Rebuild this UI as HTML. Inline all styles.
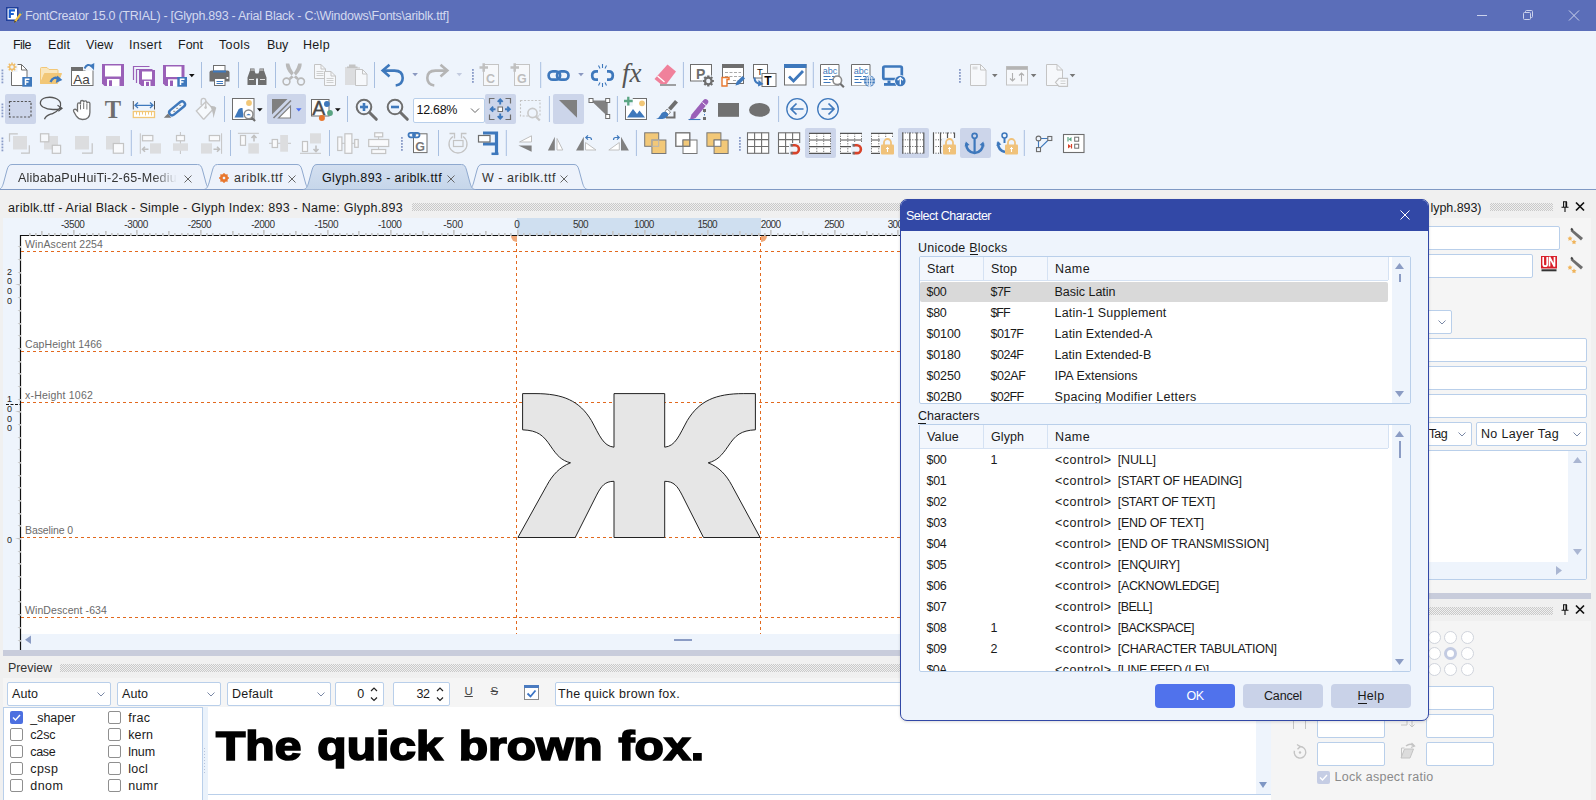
<!DOCTYPE html>
<html><head><meta charset="utf-8"><title>FontCreator</title><style>
html,body{margin:0;padding:0}
body{width:1596px;height:800px;position:relative;overflow:hidden;background:#f0f0f0;font-family:"Liberation Sans",sans-serif;font-size:12px}
body div,body span,body svg{position:absolute;box-sizing:border-box}
span{white-space:pre}
svg{overflow:visible}
</style></head><body>
<div style="left:0px;top:0px;width:1596px;height:31px;background:#5b6eb9;"></div>
<span style="left:25px;top:9.75px;font-size:12.5px;line-height:12.5px;color:#d3d9ef;letter-spacing:-0.268px;">FontCreator 15.0 (TRIAL) - [Glyph.893 - Arial Black - C:\Windows\Fonts\ariblk.ttf]</span>
<svg style="left:6px;top:7px;" width="17" height="16" viewBox="0 0 17 16"><rect x="0.75" y="0.75" width="11" height="12.500" fill="#fff" stroke="#1f3f9a" stroke-width="1.500"/><path d="M3.800 11V3.300h5.200M3.800 7h4" stroke="#1a5fd0" stroke-width="2.200" fill="none"/><path d="M8.500 13.500l6.500-9 1.800 1.300-6.500 9-2.500 1z" fill="#f0c040"/><path d="M13.800 6l1.800 1.300 1.200-1.700-1.800-1.300z" fill="#3b74c4"/><path d="M8 15.800l.5-2.300 1.800 1.300z" fill="#333"/></svg>
<svg style="left:1470px;top:0px;" width="126" height="31" viewBox="0 0 126 31"><path d="M7 15.5h10" stroke="#cbd2ec" stroke-width="1" fill="none"/><rect x="53.5" y="12.5" width="7" height="7" rx="1" stroke="#cbd2ec" stroke-width="1" fill="none"/><path d="M55.5 12.5v-1q0-1 1-1h5q1 0 1 1v5q0 1-1 1h-1" stroke="#cbd2ec" stroke-width="1" fill="none"/><path d="M99 10.5l10 10M109 10.5l-10 10" stroke="#cbd2ec" stroke-width="1" fill="none"/></svg>
<div style="left:0px;top:31px;width:1596px;height:159px;background:#eef4fc;"></div>
<span style="left:13px;top:38.75px;font-size:12.5px;line-height:12.5px;color:#1a1a1a;letter-spacing:-0.539px;">File</span>
<span style="left:48px;top:38.75px;font-size:12.5px;line-height:12.5px;color:#1a1a1a;letter-spacing:0.113px;">Edit</span>
<span style="left:86px;top:38.75px;font-size:12.5px;line-height:12.5px;color:#1a1a1a;letter-spacing:0.031px;">View</span>
<span style="left:129px;top:38.75px;font-size:12.5px;line-height:12.5px;color:#1a1a1a;letter-spacing:0.289px;">Insert</span>
<span style="left:178px;top:38.75px;font-size:12.5px;line-height:12.5px;color:#1a1a1a;letter-spacing:-0.004px;">Font</span>
<span style="left:219px;top:38.75px;font-size:12.5px;line-height:12.5px;color:#1a1a1a;letter-spacing:0.362px;">Tools</span>
<span style="left:267px;top:38.75px;font-size:12.5px;line-height:12.5px;color:#1a1a1a;letter-spacing:-0.182px;">Buy</span>
<span style="left:303px;top:38.75px;font-size:12.5px;line-height:12.5px;color:#1a1a1a;letter-spacing:0.320px;">Help</span>
<div style="left:413px;top:98px;width:72px;height:25px;background:#fff;border:1px solid #b9cfea;border-radius:2px;"></div>
<span style="left:416.6px;top:103.75px;font-size:12.5px;line-height:12.5px;color:#111;letter-spacing:-0.318px;">12.68%</span>
<svg style="left:0px;top:0px;" width="1100" height="160" viewBox="0 0 1100 160"><rect x="1.5" y="69.5" width="1.8" height="1.8" fill="#8a9cc8" /><rect x="1.5" y="72.5" width="1.8" height="1.8" fill="#8a9cc8" /><rect x="1.5" y="75.5" width="1.8" height="1.8" fill="#8a9cc8" /><rect x="1.5" y="78.5" width="1.8" height="1.8" fill="#8a9cc8" /><rect x="1.5" y="81.5" width="1.8" height="1.8" fill="#8a9cc8" /><path d="M11.5 64.5h10l5.5 5.5v15.5h-15.5z" fill="#fff" stroke="#6e6e6e" stroke-width="1" /><path d="M21.5 64.5v5.5h5.5" fill="none" stroke="#6e6e6e" stroke-width="1" /><rect x="7" y="62" width="10.5" height="10" fill="#eef4fc" /><path d="M12 62.5v9M7.5 67h9M8.8 63.8l6.4 6.4M15.2 63.8l-6.4 6.4" fill="none" stroke="#f0bd68" stroke-width="1.5" /><circle cx="12" cy="67" r="2.4" fill="#eef4fc" stroke="#f0bd68" stroke-width="1.4"/><rect x="22.3" y="77" width="9.7" height="9.7" fill="#3e78bc" /><path d="M25.5 85V79.2h4M25.5 82h3" fill="none" stroke="#fff" stroke-width="1.5" /><path d="M40.5 83.5V68.5q0-1 1-1h5.5l2 2h8q1 0 1 1v3.500h-13l-4.500 9.500z" fill="#f9e6bd" stroke="#f2c777" stroke-width="1" /><path d="M40.5 83.5l4-10h17l-4 10z" fill="#f2c777" stroke="#f2c777" stroke-width="1" /><path d="M50.5 82q3-6.500 8.500-3" fill="none" stroke="#3e78bc" stroke-width="2.3" /><path d="M57.300 75.500l5 4.500-6.500 3z" fill="#3e78bc" /><rect x="71.5" y="67.5" width="21.5" height="18" fill="#fff" stroke="#6e6e6e" stroke-width="1" /><rect x="71.5" y="67.5" width="14" height="3.5" fill="#6e6e6e" /><text x="73.3" y="84" font-size="13.5" fill="#444" font-weight="normal" font-style="normal" font-family="'Liberation Sans',sans-serif" >Aa</text><rect x="83" y="62" width="12" height="8.5" fill="#eef4fc" /><path d="M84.5 68.5q3-6 7.5-2" fill="none" stroke="#3e78bc" stroke-width="2" /><path d="M89.5 65.5l4.800-2.500-.3 7.300z" fill="#3e78bc" /><path d="M102 64h22v22h-19.5l-2.5-2.5z" fill="#9a60b8" /><rect x="105" y="65.5" width="16" height="11.0" fill="#fff" /><rect x="107" y="78.96000000000001" width="12.5" height="7.04" fill="#fff" /><rect x="109" y="80.28" width="3" height="5.720000000000001" fill="#9a60b8" /><path d="M133.5 80V66.5h16" fill="none" stroke="#9a60b8" stroke-width="1.2" /><path d="M136.5 83V69.5h16" fill="none" stroke="#9a60b8" stroke-width="1.2" /><path d="M139 70h16v16h-13.5l-2.5-2.5z" fill="#9a60b8" /><rect x="142" y="71.5" width="10" height="8.0" fill="#fff" /><rect x="144" y="80.88" width="6.5" height="5.12" fill="#fff" /><rect x="146" y="81.84" width="3" height="4.16" fill="#9a60b8" /><path d="M163 65h21.5v21h-19.0l-2.5-2.5z" fill="#9a60b8" /><rect x="166" y="66.5" width="15.5" height="10.5" fill="#fff" /><rect x="168" y="79.28" width="12.0" height="6.72" fill="#fff" /><rect x="170" y="80.53999999999999" width="3" height="5.46" fill="#9a60b8" /><rect x="177.3" y="77" width="9.7" height="9.7" fill="#3e78bc" /><path d="M180.5 85V79.2h4M180.5 82h3" fill="none" stroke="#fff" stroke-width="1.5" /><path d="M189 74h5.6l-2.8 3.2z" fill="#111" /><path d="M201.5 62V88" fill="none" stroke="#a8bfe0" stroke-width="1" /><rect x="213.5" y="65.5" width="11.5" height="7" fill="#fff" stroke="#6e6e6e" stroke-width="1" /><path d="M209.5 81.5v-9q0-2 2-2h16q2 0 2 2v9z" fill="#6e6e6e" /><rect x="213" y="70.5" width="13" height="2" fill="#3e78bc" /><rect x="214.5" y="78.5" width="10.5" height="7" fill="#fff" stroke="#6e6e6e" stroke-width="1" /><path d="M216.5 81.5h6.5M216.5 83.5h6.5" fill="none" stroke="#3e78bc" stroke-width="1" /><rect x="226.5" y="77" width="1.8" height="1.8" fill="#fff" /><path d="M238.5 62V88" fill="none" stroke="#a8bfe0" stroke-width="1" /><path d="M247.5 85v-7.5l2.5-7v-2h4.5v2l1.5 4.5v10z" fill="#6e6e6e" /><path d="M266.5 85v-7.5l-2.5-7v-2h-4.5v2l-1.5 4.5v10z" fill="#6e6e6e" /><rect x="255" y="73.5" width="4" height="5" fill="#6e6e6e" /><path d="M249 79.5h5M260 79.5h5" fill="none" stroke="#fff" stroke-width="0.8" /><path d="M250.5 70h3.5M260 70h3.5" fill="none" stroke="#fff" stroke-width="0.8" /><path d="M275.5 62V88" fill="none" stroke="#a8bfe0" stroke-width="1" /><circle cx="286.5" cy="81.5" r="3.4" fill="none" stroke="#b9b9b9" stroke-width="1.6"/><circle cx="301" cy="81.5" r="3.4" fill="none" stroke="#b9b9b9" stroke-width="1.6"/><path d="M285.800 63.500q-.3 6 5.500 11.800l5.800 4.700 1.600-2q-7-5.500-9.500-14.500zM301.700 63.500q.3 6-5.500 11.800l-5.800 4.700-1.600-2q7-5.500 9.500-14.500z" fill="#b9b9b9" /><path d="M314.5 64.5h6.5l4.5 4.5v9.5h-11z" fill="#f6f8fb" stroke="#c4c4c4" stroke-width="1" /><path d="M321.0 64.5v4.5h4.5" fill="none" stroke="#c4c4c4" stroke-width="1" /><path d="M316.5 71.5h7M316.5 73.5h7M316.5 75.5h7" fill="none" stroke="#c4c4c4" stroke-width="0.8" /><path d="M324.5 71.5h6.5l4.5 4.5v9.5h-11z" fill="#f6f8fb" stroke="#c4c4c4" stroke-width="1" /><path d="M331.0 71.5v4.5h4.5" fill="none" stroke="#c4c4c4" stroke-width="1" /><path d="M326.5 78.5h7M326.5 80.5h7M326.5 82.5h7" fill="none" stroke="#c4c4c4" stroke-width="0.8" /><rect x="345" y="67" width="15" height="18" fill="#dcdddf" /><rect x="349" y="64.5" width="6.5" height="3.5" fill="#c4c4c4" /><rect x="347" y="66.5" width="10.5" height="1.6" fill="#c4c4c4" /><path d="M355.5 69.5h7.0l4.5 4.5v11.5h-11.5z" fill="#f6f8fb" stroke="#c4c4c4" stroke-width="1" /><path d="M362.5 69.5v4.5h4.5" fill="none" stroke="#c4c4c4" stroke-width="1" /><path d="M374.5 62V88" fill="none" stroke="#a8bfe0" stroke-width="1" /><path d="M389.5 64.8l-6.8 5.8 6.8 5.8" fill="none" stroke="#3e78bc" stroke-width="2.6" /><path d="M383.5 70.6h11q8.2 0 8.2 7.5 0 6.5-7 7.4" fill="none" stroke="#3e78bc" stroke-width="2.6" /><path d="M412.3 73h5.6l-2.8 3.2z" fill="#8a98c0" /><path d="M440.5 64.8l6.8 5.8-6.8 5.8" fill="none" stroke="#b5b5b5" stroke-width="2.6" /><path d="M446.5 70.6h-11q-8.2 0-8.2 7.5 0 6.5 7 7.4" fill="none" stroke="#b5b5b5" stroke-width="2.6" /><path d="M456.5 73h5.6l-2.8 3.2z" fill="#c3cbdf" /><rect x="472" y="69" width="1.8" height="1.8" fill="#8a9cc8" /><rect x="472" y="72" width="1.8" height="1.8" fill="#8a9cc8" /><rect x="472" y="75" width="1.8" height="1.8" fill="#8a9cc8" /><rect x="472" y="78" width="1.8" height="1.8" fill="#8a9cc8" /><rect x="472" y="81" width="1.8" height="1.8" fill="#8a9cc8" /><rect x="483.5" y="64.5" width="15" height="21" fill="#f6f8fb" stroke="#c4c4c4" stroke-width="1" /><path d="M479.5 67.5h8.5M483.7 63.3v8.5" fill="none" stroke="#c0c0c0" stroke-width="2.5" /><text x="486.1" y="82.8" font-size="12.5" fill="#bdbdbd" font-weight="bold" font-style="normal" font-family="'Liberation Sans',sans-serif" >C</text><rect x="514.5" y="64.5" width="15" height="21" fill="#f6f8fb" stroke="#c4c4c4" stroke-width="1" /><path d="M510.5 67.5h8.5M514.7 63.3v8.5" fill="none" stroke="#c0c0c0" stroke-width="2.5" /><text x="517.1" y="82.8" font-size="12.5" fill="#bdbdbd" font-weight="bold" font-style="normal" font-family="'Liberation Sans',sans-serif" >G</text><path d="M540.7 62V88" fill="none" stroke="#a8bfe0" stroke-width="1" /><rect x="548.6" y="71.3" width="11.5" height="8.4" fill="none" stroke="#3e78bc" stroke-width="2.7" rx="4.2" /><rect x="557" y="71.3" width="11.5" height="8.4" fill="none" stroke="#3e78bc" stroke-width="2.7" rx="4.2" /><path d="M578.2 73h5.6l-2.8 3.2z" fill="#8a98c0" /><path d="M598 71.3h-1.8q-4 0-4 4.2t4 4.2h1.8M607 71.3h1.8q4 0 4 4.2t-4 4.2h-1.8" fill="none" stroke="#3e78bc" stroke-width="2.7" /><path d="M602.5 64v4M602.5 83v4M598.5 65.5l1.5 3M606.5 65.5l-1.5 3M598.5 85.5l1.5-3M606.5 85.5l-1.5-3" fill="none" stroke="#3e78bc" stroke-width="1.1" /><text x="622" y="81.5" font-size="27" fill="#555" font-weight="normal" font-style="italic" font-family="'Liberation Serif',serif" >fx</text><path d="M654.5 79l13-14.5 8.5 7-9.5 12.5h-6z" fill="#f0819b" /><path d="M657.5 76l7 6" fill="none" stroke="#fff" stroke-width="1.3" /><path d="M660 85h16" fill="none" stroke="#8a8a8a" stroke-width="1.6" /><path d="M683.4 62V88" fill="none" stroke="#a8bfe0" stroke-width="1" /><rect x="690.5" y="64.5" width="21" height="16.5" fill="#fff" stroke="#6e6e6e" stroke-width="1" /><text x="696" y="78.5" font-size="14" fill="#6e6e6e" font-weight="bold" font-style="normal" font-family="'Liberation Sans',sans-serif" >P</text><circle cx="708.3" cy="81" r="6.4" fill="#eef4fc"/><circle cx="708.3" cy="81" r="3.286" fill="none" stroke="#6e6e6e" stroke-width="2.226"/><path d="M712.01 81.00L713.87 81.00M710.92 83.62L712.24 84.94M708.30 84.71L708.30 86.56M705.68 83.62L704.36 84.94M704.59 81.00L702.73 81.00M705.68 78.38L704.36 77.06M708.30 77.29L708.30 75.44M710.92 78.38L712.24 77.06" fill="none" stroke="#6e6e6e" stroke-width="2.226" /><rect x="722.5" y="64.5" width="21" height="19" fill="#fff" stroke="#6e6e6e" stroke-width="1" /><rect x="722.5" y="64.5" width="21" height="3.5" fill="#6e6e6e" /><path d="M725 72.5h16M725 76.5h16M733 80.5h8" fill="none" stroke="#a9a9a9" stroke-width="1" stroke-dasharray="3 1.5"/><path d="M722 86v-8.5h7v2h-2v6.5z" fill="#fff" stroke="#e8772e" stroke-width="1.4" /><path d="M735.5 85.5l1-3.5 6-6 2.5 2.5-6 6z" fill="#3e78bc" /><rect x="753.5" y="64.5" width="14" height="13.5" fill="#fff" stroke="#6e6e6e" stroke-width="1" /><text x="757" y="75" font-size="9.5" fill="#111" font-weight="normal" font-style="normal" font-family="'Liberation Sans',sans-serif" >T</text><rect x="762" y="73.5" width="14" height="13" fill="#fff" stroke="#6e6e6e" stroke-width="1" /><text x="764.2" y="85.3" font-size="12" fill="#000" font-weight="bold" font-style="normal" font-family="'Liberation Sans',sans-serif" >T</text><path d="M754.5 77.5q0 6 6.5 6.5" fill="none" stroke="#3e78bc" stroke-width="2" /><path d="M758.5 80l5 4-5.5 2.5z" fill="#3e78bc" /><rect x="784.5" y="64.5" width="21.5" height="20.5" fill="#fff" stroke="#6e6e6e" stroke-width="1" /><rect x="784" y="64" width="22.5" height="4" fill="#3e78bc" /><path d="M789 76.5l4.5 4.5 9.5-10" fill="none" stroke="#3e78bc" stroke-width="2.8" /><path d="M813.3 62V88" fill="none" stroke="#a8bfe0" stroke-width="1" /><path d="M820.5 85.5v-21h18.5v21" fill="#fff" stroke="#6e6e6e" stroke-width="1" /><path d="M820.5 85.5h18.5" fill="none" stroke="#6e6e6e" stroke-width="1" stroke-dasharray="1 1"/><text x="822.8" y="73.5" font-size="9" fill="#3e78bc" font-weight="normal" font-style="normal" font-family="'Liberation Sans',sans-serif" >abc</text><path d="M823.5 76.5h7M832.0 76.5h3M823.5 79.5h4M829.0 79.5h6M823.5 82.5h7" fill="none" stroke="#3e78bc" stroke-width="1" /><path d="M851.5 85.5v-21h18.5v21" fill="#fff" stroke="#6e6e6e" stroke-width="1" /><path d="M851.5 85.5h18.5" fill="none" stroke="#6e6e6e" stroke-width="1" stroke-dasharray="1 1"/><text x="853.8" y="73.5" font-size="9" fill="#3e78bc" font-weight="normal" font-style="normal" font-family="'Liberation Sans',sans-serif" >abc</text><path d="M854.5 76.5h7M863.0 76.5h3M854.5 79.5h4M860.0 79.5h6M854.5 82.5h7" fill="none" stroke="#3e78bc" stroke-width="1" /><circle cx="837.3" cy="80.3" r="4.3" fill="#fff" stroke="#8a8a8a" stroke-width="1.6"/><path d="M840.3 83.8l3.6 3.4" fill="none" stroke="#6e6e6e" stroke-width="2.2" /><circle cx="869.5" cy="81" r="5.6" fill="#3e78bc"/><path d="M864 81h11M869.5 75.5v11M865 78h9M865 84h9" fill="none" stroke="#fff" stroke-width="0.8" /><ellipse cx="869.5" cy="81" rx="2.5" ry="5.3" fill="none" stroke="#fff" stroke-width="0.8"/><rect x="883.3" y="66.5" width="18.5" height="12.5" fill="none" stroke="#3e78bc" stroke-width="2.7" rx="1.5" /><path d="M889 80.5v3" fill="none" stroke="#3e78bc" stroke-width="3" /><rect x="884" y="83" width="12" height="2.8" fill="#3e78bc" /><circle cx="900.3" cy="81" r="6" fill="#eef4fc"/><circle cx="900.3" cy="81" r="5.3" fill="#3e78bc"/><path d="M900.3 84.5v-6.5M897.6 80.3l2.7-2.7 2.7 2.7" fill="none" stroke="#fff" stroke-width="1.3" /><rect x="959" y="69" width="1.8" height="1.8" fill="#8a9cc8" /><rect x="959" y="72" width="1.8" height="1.8" fill="#8a9cc8" /><rect x="959" y="75" width="1.8" height="1.8" fill="#8a9cc8" /><rect x="959" y="78" width="1.8" height="1.8" fill="#8a9cc8" /><rect x="959" y="81" width="1.8" height="1.8" fill="#8a9cc8" /><path d="M970.5 64.5h10.0l5.5 5.5v15.5h-15.5z" fill="#f6f8fb" stroke="#c4c4c4" stroke-width="1" /><path d="M980.5 64.5v5.5h5.5" fill="none" stroke="#c4c4c4" stroke-width="1" /><rect x="972.5" y="66.5" width="5" height="3" fill="#dcdddf" /><path d="M992 74h5.6l-2.8 3.2z" fill="#777" /><rect x="1006.5" y="66.5" width="21" height="18.5" fill="#f6f8fb" stroke="#c4c4c4" stroke-width="1" /><rect x="1006.5" y="66.5" width="21" height="3.3" fill="#b4b4b4" /><path d="M1012.5 73v8M1010 78.5l2.5 2.5 2.5-2.5M1021.5 81.5v-8M1019 75.5l2.5-2.5 2.5 2.5" fill="none" stroke="#b0b0b0" stroke-width="1.1" /><path d="M1030.8 74h5.6l-2.8 3.2z" fill="#777" /><path d="M1046.5 64.5h10.5l5.5 5.5v15.5h-16z" fill="#f6f8fb" stroke="#c4c4c4" stroke-width="1" /><path d="M1057.0 64.5v5.5h5.5" fill="none" stroke="#c4c4c4" stroke-width="1" /><path d="M1055.5 82.3l3.5-4h8.5v8h-8.5z" fill="#f6f8fb" stroke="#c4c4c4" stroke-width="1.2" /><path d="M1060.5 81h5M1060.5 83.5h5" fill="none" stroke="#c4c4c4" stroke-width="0.8" /><path d="M1069.7 74h5.6l-2.8 3.2z" fill="#777" /><rect x="1.5" y="103.5" width="1.8" height="1.8" fill="#8a9cc8" /><rect x="1.5" y="106.5" width="1.8" height="1.8" fill="#8a9cc8" /><rect x="1.5" y="109.5" width="1.8" height="1.8" fill="#8a9cc8" /><rect x="1.5" y="112.5" width="1.8" height="1.8" fill="#8a9cc8" /><rect x="1.5" y="115.5" width="1.8" height="1.8" fill="#8a9cc8" /><rect x="5" y="94" width="31" height="30" fill="#ccd5ea" rx="2" /><rect x="9.5" y="101.5" width="21.5" height="15.5" fill="none" stroke="#555" stroke-width="1.2" stroke-dasharray="2.2 1.6"/><path d="M62 108.300C55 110 47 109.500 43 107C38.500 104 40 99 46 97.700C52 96.300 59 98.500 60.500 103C61.500 107 58 111 53 113.300C49 115 46 115 44.500 119.300" fill="none" stroke="#555" stroke-width="1.3" /><path d="M57.500 105.300L62 108.300L58.300 111.300" fill="none" stroke="#555" stroke-width="1.2" /><path d="M77.500 111v-6.500q0-1.600 1.500-1.600t1.500 1.600v-2.400q0-1.600 1.600-1.600t1.600 1.600v.3q0-1.500 1.600-1.500t1.600 1.500v1.200q0-1.400 1.500-1.400t1.500 1.400v8.900q0 7-7.500 7-3.800 0-6-3.300l-2.600-4.600q-.8-1.600.6-2.200t2.600 1.100z" fill="#fff" stroke="#6e6e6e" stroke-width="1.3" /><path d="M80.500 105v4.500M83.700 103v6M86.900 104v5.500" fill="none" stroke="#6e6e6e" stroke-width="1" /><text x="104.7" y="118" font-size="24.5" fill="#6e6e6e" font-weight="bold" font-style="normal" font-family="'Liberation Serif',serif" >T</text><path d="M133.300 101v8.500M154.500 101v8.500" fill="none" stroke="#555" stroke-width="1" /><path d="M135 105.300h18M138 102.500l-3 2.800 3 2.800M150 102.500l3 2.800-3 2.800" fill="none" stroke="#3e78bc" stroke-width="1.3" /><rect x="133.3" y="111.5" width="21.2" height="6" fill="#fff" stroke="#f2c777" stroke-width="1.3" /><path d="M136.500 112v2.500M139.500 112v3.500M142.500 112v2.500M145.500 112v3.500M148.500 112v2.500M151.500 112v3.500" fill="none" stroke="#f2c777" stroke-width="1" /><g transform="rotate(-39 177.1 108.300)"><rect x="167.800" y="105.400" width="18.600" height="5.800" rx="2.900" fill="#f4f8fd" stroke="#3e78bc" stroke-width="2.400"/></g><path d="M179.200 105.300h2M176.200 108.300h2M173.200 111.300h2" fill="none" stroke="#7a7a7a" stroke-width="0.9" /><path d="M163.800 117.800l4.200-4.200 3.300 4.200z" fill="#7a7a7a" /><path d="M196.300 110.900l9.800-9.500 7.200 7.700-9 9.700q-.6.6-1.300 0z" fill="#f6f9fc" stroke="#c6c6c6" stroke-width="1.4" /><path d="M201.200 105v-4.300a2.300 2.300 0 0 1 4.600 0v6.500" fill="none" stroke="#c6c6c6" stroke-width="1.3" /><circle cx="205.6" cy="107.6" r="1.3" fill="#c6c6c6"/><path d="M210.300 106.100q4.800-.600 6 1.700l-2.900 10.400q-.5-5.500-1.300-7.500z" fill="#bdbdbd" /><path d="M224.5 96V122" fill="none" stroke="#a8bfe0" stroke-width="1" /><rect x="232.5" y="98.5" width="21.5" height="21" fill="#fff" stroke="#6e6e6e" stroke-width="1" /><circle cx="249" cy="103" r="2.9" fill="#f2c777"/><path d="M234.500 117.500l4-8q1-1.500 2.500-1.500h1.500l1 9.500z" fill="#3e78bc" /><circle cx="248.6" cy="114.3" r="4.4" fill="#fff" stroke="#8a8a8a" stroke-width="1.5"/><path d="M246.300 115.300q2.300-3 4.600 0z" fill="#3e78bc" /><path d="M251.600 117.800l3.500 3.200" fill="none" stroke="#6e6e6e" stroke-width="2.2" /><path d="M257 108.3h5.6l-2.8 3.2z" fill="#111" /><rect x="267" y="94" width="39" height="30" fill="#ccd5ea" rx="2" /><path d="M272 99v15.500L287.500 99z" fill="#808080" /><path d="M290.500 106v12h-12z" fill="#fff" stroke="#808080" stroke-width="1.1" /><path d="M273.500 118L291 100.500" fill="none" stroke="#808080" stroke-width="1.6" /><path d="M296 108.3h5.6l-2.8 3.2z" fill="#4a6cf0" /><rect x="311.5" y="99.5" width="17.5" height="16.5" fill="#fff" stroke="#6e6e6e" stroke-width="1" /><text x="312.3" y="115.3" font-size="19.5" fill="#4a4a4a" font-weight="normal" font-style="normal" font-family="'Liberation Sans',sans-serif" stroke="#4a4a4a" stroke-width="0.4">A</text><circle cx="326.9" cy="104" r="2.9" fill="#3e78bc"/><circle cx="330" cy="113" r="2.9" fill="#5aa582"/><circle cx="321.9" cy="118" r="3" fill="#e8772e"/><path d="M335 108.3h5.6l-2.8 3.2z" fill="#111" /><path d="M347.5 96V122" fill="none" stroke="#a8bfe0" stroke-width="1" /><circle cx="364" cy="107" r="7.3" fill="none" stroke="#6e6e6e" stroke-width="2"/><path d="M369.5 112.5l6.800 6.800" fill="none" stroke="#6e6e6e" stroke-width="3" stroke-linecap="round"/><path d="M360 107h8" fill="none" stroke="#3e78bc" stroke-width="2.6" /><path d="M364 103v8" fill="none" stroke="#3e78bc" stroke-width="2.6" /><circle cx="395" cy="107" r="7.3" fill="none" stroke="#6e6e6e" stroke-width="2"/><path d="M400.5 112.5l6.800 6.800" fill="none" stroke="#6e6e6e" stroke-width="3" stroke-linecap="round"/><path d="M391 107h8" fill="none" stroke="#3e78bc" stroke-width="2.6" /><path d="M471 108.500l4 4 4-4" fill="none" stroke="#666" stroke-width="1" /><rect x="485" y="94" width="31" height="30" fill="#ccd5ea" rx="2" /><path d="M494.500 98.500h-5v5M505.500 98.500h5v5M494.500 119.500h-5v-5M505.500 119.500h5v-5" fill="none" stroke="#6e6e6e" stroke-width="1.2" /><rect x="498" y="107" width="4.5" height="4.5" fill="#fff" stroke="#6e6e6e" stroke-width="1" /><path d="M500.200 104.500v-5M497.700 101.800l2.500-2.500 2.500 2.500M500.200 113.500v5M497.700 116.200l2.500 2.500 2.500-2.500M495.500 109.200h-5M493.200 106.700l-2.500 2.500 2.500 2.500M505 109.200h5M507.300 106.700l2.500 2.500-2.500 2.500" fill="none" stroke="#3e78bc" stroke-width="1.9" /><rect x="520.5" y="100.5" width="19.5" height="15.5" fill="none" stroke="#c4c4c4" stroke-width="1.1" stroke-dasharray="2 1.600"/><circle cx="532.5" cy="113" r="4.6" fill="#eef4fc" stroke="#c8c8c8" stroke-width="1.6"/><path d="M535.800 116.500l4 4" fill="none" stroke="#c8c8c8" stroke-width="2.2" /><path d="M549.4 96V122" fill="none" stroke="#a8bfe0" stroke-width="1" /><rect x="553" y="94" width="31" height="30" fill="#ccd5ea" rx="2" /><path d="M559 100.100h18v17.600z" fill="#808080" /><path d="M591 100.500h16.700v16z" fill="#808080" /><rect x="589" y="98.5" width="4" height="4" fill="#fff" stroke="#6e6e6e" stroke-width="1" /><rect x="605.7" y="98.5" width="4" height="4" fill="#fff" stroke="#6e6e6e" stroke-width="1" /><rect x="605.7" y="114.5" width="4" height="4" fill="#fff" stroke="#6e6e6e" stroke-width="1" /><path d="M617.4 96V122" fill="none" stroke="#a8bfe0" stroke-width="1" /><rect x="625.5" y="98.5" width="21" height="21" fill="#fff" stroke="#6e6e6e" stroke-width="1" /><circle cx="642" cy="103.3" r="2.9" fill="#f2c777"/><path d="M627 117.500l6-8.500 4 5 2.500-3.500 5.500 7z" fill="#3e78bc" /><rect x="623.3" y="96.3" width="9.5" height="9.5" fill="#eef4fc" /><path d="M624 101h8.700M628.300 96.700v8.700" fill="none" stroke="#5aa582" stroke-width="2.3" /><path d="M668 108l7-8 3 2.500-7 8z" fill="#6e6e6e" /><path d="M667 109l3.500 3-2 2.500-3.500-3z" fill="#fff" stroke="#6e6e6e" stroke-width="0.8" /><path d="M656 119q3-1 4.500-4 1.500-3.500 5-3.300 3 1 2.500 4-1.500 4-12 3.300z" fill="#3e78bc" /><path d="M666 117.500h8.500v-6" fill="none" stroke="#6e6e6e" stroke-width="2" /><path d="M691.500 114.500l12-14.500q1.800-1.800 3.800-.2t.4 3.800l-12 14.500-6 2.200z" fill="#9a60b8" /><path d="M702.500 102.500l3.500 3" fill="none" stroke="#fff" stroke-width="1" /><path d="M688.500 119.500h12" fill="none" stroke="#3e78bc" stroke-width="1.1" /><path d="M704.500 111v7" fill="none" stroke="#3e78bc" stroke-width="1" stroke-dasharray="1.500 1.500"/><rect x="703" y="109" width="3" height="3" fill="#6e6e6e" /><rect x="703" y="117" width="3" height="3" fill="#6e6e6e" /><rect x="718" y="103" width="21" height="13.8" fill="#717171" /><ellipse cx="759.5" cy="109.9" rx="10.5" ry="6.9" fill="#717171"/><path d="M778.6 96V122" fill="none" stroke="#a8bfe0" stroke-width="1" /><circle cx="797.1" cy="109" r="10.3" fill="none" stroke="#3e78bc" stroke-width="1.3"/><path d="M803.500 109h-12M796.500 103.500l-5.500 5.500 5.500 5.500" fill="none" stroke="#3e78bc" stroke-width="1.7" /><circle cx="828" cy="109" r="10.3" fill="none" stroke="#3e78bc" stroke-width="1.3"/><path d="M821.500 109h12M828.500 103.500l5.500 5.500-5.500 5.500" fill="none" stroke="#3e78bc" stroke-width="1.7" /><rect x="1.5" y="137.5" width="1.8" height="1.8" fill="#8a9cc8" /><rect x="1.5" y="140.5" width="1.8" height="1.8" fill="#8a9cc8" /><rect x="1.5" y="143.5" width="1.8" height="1.8" fill="#8a9cc8" /><rect x="1.5" y="146.5" width="1.8" height="1.8" fill="#8a9cc8" /><rect x="1.5" y="149.5" width="1.8" height="1.8" fill="#8a9cc8" /><rect x="13" y="136" width="14" height="13.5" fill="#dcdddf" /><path d="M17.800 133.800h-8.300v8M21 153.200h8.300v-8" fill="none" stroke="#c4c4c4" stroke-width="1.2" /><rect x="44" y="136" width="14" height="13.5" fill="#dcdddf" /><rect x="40.5" y="133.8" width="8.3" height="8" fill="#f6f8fb" stroke="#c4c4c4" stroke-width="1.2" /><rect x="52.3" y="145.3" width="8.3" height="8" fill="#f6f8fb" stroke="#c4c4c4" stroke-width="1.2" /><rect x="75" y="136" width="14" height="13.5" fill="#dcdddf" /><path d="M82 153.200h10.200v-10" fill="none" stroke="#c4c4c4" stroke-width="1.2" /><rect x="106" y="136" width="14" height="13.5" fill="#dcdddf" /><rect x="113.3" y="143.5" width="10.2" height="9.7" fill="#f9fafc" stroke="#c4c4c4" stroke-width="1.2" /><path d="M131.3 130V156" fill="none" stroke="#a8bfe0" stroke-width="1" /><path d="M140.300 133.300v20.500" fill="none" stroke="#c4c4c4" stroke-width="1" /><rect x="142.5" y="135.5" width="10.3" height="5.3" fill="#f9fafc" stroke="#c4c4c4" stroke-width="1.2" /><rect x="150" y="143.3" width="11" height="10.3" fill="#dcdddf" /><path d="M148.5 149.2h-5.5M145.0 146.7l-2.5 2.500 2.5 2.500" fill="none" stroke="#c0c0c0" stroke-width="1.6" /><path d="M180.400 132v22" fill="none" stroke="#c4c4c4" stroke-width="1" /><rect x="176.5" y="135.5" width="8" height="5.3" fill="#f9fafc" stroke="#c4c4c4" stroke-width="1.2" /><rect x="173" y="143.3" width="15" height="7.5" fill="#dcdddf" /><path d="M221.600 133.300v20.500" fill="none" stroke="#c4c4c4" stroke-width="1" /><rect x="209.3" y="135.5" width="10.3" height="5.3" fill="#f9fafc" stroke="#c4c4c4" stroke-width="1.2" /><rect x="201" y="143.3" width="11" height="10.3" fill="#dcdddf" /><path d="M213.5 149.2h5.5M217.0 146.7l2.5 2.500 -2.5 2.500" fill="none" stroke="#c0c0c0" stroke-width="1.6" /><path d="M230.5 130V156" fill="none" stroke="#a8bfe0" stroke-width="1" /><path d="M237.900 133.300h21" fill="none" stroke="#c4c4c4" stroke-width="1" /><rect x="240.5" y="135.5" width="5" height="9.8" fill="#f9fafc" stroke="#c4c4c4" stroke-width="1.2" /><rect x="248.3" y="143.3" width="10.6" height="10.3" fill="#dcdddf" /><path d="M254 141.5v-5.5M251.5 138.0l2.500 -2.5 2.500 2.5" fill="none" stroke="#c0c0c0" stroke-width="1.6" /><path d="M269 143.300h22" fill="none" stroke="#c4c4c4" stroke-width="1" /><rect x="272.2" y="139.5" width="5.3" height="8" fill="#f9fafc" stroke="#c4c4c4" stroke-width="1.2" /><rect x="280.2" y="135" width="7.8" height="16.7" fill="#dcdddf" /><path d="M300 153.300h21" fill="none" stroke="#c4c4c4" stroke-width="1" /><rect x="302.5" y="141.5" width="5" height="10" fill="#f9fafc" stroke="#c4c4c4" stroke-width="1.2" /><rect x="310" y="133.3" width="11" height="10.2" fill="#dcdddf" /><path d="M316 145.5v5.5M313.5 149.0l2.500 2.5 2.500 -2.5" fill="none" stroke="#c0c0c0" stroke-width="1.6" /><path d="M329.5 130V156" fill="none" stroke="#a8bfe0" stroke-width="1" /><path d="M341 143.300h16" fill="none" stroke="#c4c4c4" stroke-width="1" /><rect x="337.7" y="137" width="4.2" height="13.5" fill="#f9fafc" stroke="#c4c4c4" stroke-width="1.2" /><rect x="344.9" y="133.8" width="7" height="19.5" fill="#f9fafc" stroke="#c4c4c4" stroke-width="1.2" /><rect x="354.7" y="139.5" width="3.5" height="7.8" fill="#f9fafc" stroke="#c4c4c4" stroke-width="1.2" /><path d="M378.600 136v14" fill="none" stroke="#c4c4c4" stroke-width="1" /><rect x="374.7" y="132.8" width="8" height="4" fill="#f9fafc" stroke="#c4c4c4" stroke-width="1.2" /><rect x="368.7" y="139.5" width="20" height="7" fill="#f9fafc" stroke="#c4c4c4" stroke-width="1.2" /><rect x="371.7" y="149.5" width="14" height="4" fill="#f9fafc" stroke="#c4c4c4" stroke-width="1.2" /><rect x="401" y="137" width="1.8" height="1.8" fill="#8a9cc8" /><rect x="401" y="140" width="1.8" height="1.8" fill="#8a9cc8" /><rect x="401" y="143" width="1.8" height="1.8" fill="#8a9cc8" /><rect x="401" y="146" width="1.8" height="1.8" fill="#8a9cc8" /><rect x="401" y="149" width="1.8" height="1.8" fill="#8a9cc8" /><rect x="413.5" y="133.8" width="13.5" height="18.8" fill="#fff" stroke="#6e6e6e" stroke-width="1" /><text x="415.3" y="150.5" font-size="12.5" fill="#777" font-weight="bold" font-style="normal" font-family="'Liberation Sans',sans-serif" >G</text><rect x="408.5" y="132.8" width="6.5" height="4.5" fill="none" stroke="#3e78bc" stroke-width="1.8" rx="2.2" /><rect x="413" y="132.8" width="6.5" height="4.5" fill="none" stroke="#3e78bc" stroke-width="1.8" rx="2.2" /><path d="M438.5 130V156" fill="none" stroke="#a8bfe0" stroke-width="1" /><path d="M453 136.500a9 9 0 1 0 10 0" fill="none" stroke="#c4c4c4" stroke-width="1.3" /><path d="M449.500 133.500h5v5M466.500 133.500h-5v5" fill="none" stroke="#c4c4c4" stroke-width="1.3" /><rect x="453.5" y="140.5" width="9.5" height="6" fill="none" stroke="#c4c4c4" stroke-width="1.2" /><path d="M483 133h13.500v20.500M483 144h13.500" fill="none" stroke="#3e78bc" stroke-width="3.2" /><path d="M491.500 153.800h7" fill="none" stroke="#3e78bc" stroke-width="2.5" /><rect x="478.5" y="135.5" width="11.5" height="6.5" fill="#fff" stroke="#6e6e6e" stroke-width="1.2" /><path d="M506.3 130V156" fill="none" stroke="#a8bfe0" stroke-width="1" /><path d="M519.500 142l12-6.200v6.200z" fill="#fff" stroke="#c0c0c0" stroke-width="1" /><path d="M518.400 145.400h13.200v6.300z" fill="#808080" /><path d="M547.900 150.400l6.900-13.700v13.700z" fill="#808080" /><path d="M557 138.500v11.500h5.800z" fill="#fff" stroke="#c0c0c0" stroke-width="1" /><path d="M576 150.400l7.800-13.700v13.700z" fill="#808080" /><path d="M585.500 142.500v7.500h10.500z" fill="#fff" stroke="#c0c0c0" stroke-width="1" /><path d="M586 137.500h3.500q2 0 2 2.500M588 135.300l-2.200 2.200 2.200 2.200" fill="none" stroke="#3e78bc" stroke-width="1.2" /><path d="M628.900 150.400l-7.900-13.700v13.700z" fill="#808080" /><path d="M619.300 142.500v7.500h-10.500z" fill="#fff" stroke="#c0c0c0" stroke-width="1" /><path d="M619 137.500h-3.500q-2 0-2 2.500M617 135.300l2.200 2.200-2.200 2.200" fill="none" stroke="#3e78bc" stroke-width="1.2" /><path d="M636.4 130V156" fill="none" stroke="#a8bfe0" stroke-width="1" /><rect x="644.7" y="132.8" width="14" height="13.5" fill="#f2c878" stroke="#777" stroke-width="1" /><rect x="651.9" y="140" width="14" height="13.5" fill="#f2c878" stroke="#777" stroke-width="1" /><rect x="651.9" y="140" width="6.8" height="6.3" fill="none" stroke="#b5b5b5" stroke-width="1" /><rect x="675.8" y="132.8" width="14" height="13.5" fill="#fff" stroke="#777" stroke-width="1" /><rect x="683" y="140" width="14" height="13.5" fill="#fff" stroke="#777" stroke-width="1" /><rect x="683" y="140" width="6.8" height="6.3" fill="#f2c878" stroke="#777" stroke-width="1" /><rect x="675.8" y="132.8" width="14" height="13.5" fill="none" stroke="#777" stroke-width="1" /><rect x="706.9" y="132.8" width="14" height="13.5" fill="#f2c878" stroke="#777" stroke-width="1" /><rect x="714.1" y="140" width="14" height="13.5" fill="#f2c878" stroke="#777" stroke-width="1" /><rect x="714.1" y="140" width="6.8" height="6.3" fill="#fff" stroke="#777" stroke-width="1" /><rect x="739" y="137" width="1.8" height="1.8" fill="#8a9cc8" /><rect x="739" y="140" width="1.8" height="1.8" fill="#8a9cc8" /><rect x="739" y="143" width="1.8" height="1.8" fill="#8a9cc8" /><rect x="739" y="146" width="1.8" height="1.8" fill="#8a9cc8" /><rect x="739" y="149" width="1.8" height="1.8" fill="#8a9cc8" /><rect x="747.5" y="132.8" width="21.2" height="20.5" fill="#fff" stroke="#6e6e6e" stroke-width="1.1" /><path d="M754.6 132.8v20.5M761.6 132.8v20.5M747.5 139.6h21.2M747.5 146.5h21.2" fill="none" stroke="#6e6e6e" stroke-width="1.1" /><rect x="778.5" y="132.8" width="21.2" height="20.5" fill="#fff" stroke="#6e6e6e" stroke-width="1.1" /><path d="M785.6 132.8v20.5M792.6 132.8v20.5M778.5 139.6h21.2M778.5 146.5h21.2" fill="none" stroke="#6e6e6e" stroke-width="1.1" /><rect x="789" y="143" width="12" height="12" fill="#eef4fc" /><path d="M791.5 145.3h3.500a3.900 3.900 0 0 1 0 7.800h-3.500" fill="none" stroke="#d8432a" stroke-width="2.6" /><rect x="790.5" y="144" width="2.2" height="2.6" fill="#6e6e6e" /><rect x="790.5" y="151.8" width="2.2" height="2.6" fill="#6e6e6e" /><rect x="805" y="128" width="31" height="30" fill="#ccd5ea" rx="2" /><rect x="809" y="133.3" width="22" height="20" fill="#fff" /><path d="M809 133.300h22M809 140h22M809 146.700h22M809 153.300h22" fill="none" stroke="#555" stroke-width="1.2" /><path d="M809.5 133.300v20M816.8 133.300v20M823.7 133.300v20M830.5 133.300v20" fill="none" stroke="#555" stroke-width="1" stroke-dasharray="1 1.500"/><rect x="840" y="133.3" width="22" height="20" fill="#fff" /><path d="M840 133.300h22M840 140h22M840 146.700h22M840 153.300h22" fill="none" stroke="#555" stroke-width="1.2" /><path d="M840.5 133.300v20M847.8 133.300v20M854.7 133.300v20M861.5 133.300v20" fill="none" stroke="#555" stroke-width="1" stroke-dasharray="1 1.500"/><rect x="851" y="143" width="12" height="12" fill="#eef4fc" /><path d="M853.5 145.3h3.500a3.900 3.900 0 0 1 0 7.800h-3.500" fill="none" stroke="#d8432a" stroke-width="2.6" /><rect x="852.5" y="144" width="2.2" height="2.6" fill="#6e6e6e" /><rect x="852.5" y="151.8" width="2.2" height="2.6" fill="#6e6e6e" /><rect x="871" y="133.3" width="22" height="20" fill="#fff" /><path d="M871 133.300h22M871 140h22M871 146.700h22M871 153.300h22" fill="none" stroke="#555" stroke-width="1.2" /><path d="M871.5 133.300v20M878.8 133.300v20M885.7 133.300v20M892.5 133.300v20" fill="none" stroke="#555" stroke-width="1" stroke-dasharray="1 1.500"/><rect x="880" y="138" width="15" height="17" fill="#eef4fc" /><path d="M884 145v-2.500a3.500 3.500 0 0 1 7 0v2.500" fill="none" stroke="#f0c27a" stroke-width="1.8" /><rect x="881" y="144.5" width="13" height="10" fill="#f0c27a" rx="1" /><path d="M887.5 147v5M886 148.5h3" fill="none" stroke="#fff" stroke-width="1.1" /><rect x="898" y="128" width="31" height="30" fill="#ccd5ea" rx="2" /><rect x="902.8" y="133" width="21" height="20.2" fill="#fff" /><path d="M902.8 132.500v21M909.8 132.500v21M916.8 132.500v21M923.8 132.500v21" fill="none" stroke="#555" stroke-width="1.2" /><path d="M902.3 133h22M902.3 139.800h22M902.3 146.500h22M902.3 153.200h22" fill="none" stroke="#555" stroke-width="1" stroke-dasharray="1 1.500"/><rect x="933.5" y="133" width="21" height="20.2" fill="#fff" /><path d="M933.5 132.500v21M940.5 132.500v21M947.5 132.500v21M954.5 132.500v21" fill="none" stroke="#555" stroke-width="1.2" /><path d="M933 133h22M933 139.800h22M933 146.500h22M933 153.200h22" fill="none" stroke="#555" stroke-width="1" stroke-dasharray="1 1.500"/><rect x="942" y="138" width="15" height="17" fill="#eef4fc" /><path d="M946 145v-2.500a3.500 3.500 0 0 1 7 0v2.500" fill="none" stroke="#f0c27a" stroke-width="1.8" /><rect x="943" y="144.5" width="13" height="10" fill="#f0c27a" rx="1" /><path d="M949.5 147v5M948 148.5h3" fill="none" stroke="#fff" stroke-width="1.1" /><rect x="960" y="128" width="31" height="30" fill="#ccd5ea" rx="2" /><circle cx="974.6" cy="135.8" r="2.5" fill="none" stroke="#3e78bc" stroke-width="1.7"/><path d="M974.6 138.500v13.500" fill="none" stroke="#3e78bc" stroke-width="2.2" /><path d="M966.1 143.500q.5 9 8.500 9.500 8-.5 8.500-9.500" fill="none" stroke="#3e78bc" stroke-width="2.6" /><path d="M964.6 146.500l1.300-5 3.700 3.500zM984.6 146.500l-1.300-5-3.700 3.500z" fill="#3e78bc" /><circle cx="1004.5" cy="135.5" r="2.5" fill="none" stroke="#3e78bc" stroke-width="1.5"/><path d="M1004.500 138v5" fill="none" stroke="#3e78bc" stroke-width="2" /><path d="M998 142.500q0 8 7 9.500" fill="none" stroke="#3e78bc" stroke-width="2.6" /><path d="M996.300 146l1.500-5 3.500 3.500z" fill="#3e78bc" /><path d="M1008 145v-2.500a3.500 3.500 0 0 1 7 0v2.500" fill="none" stroke="#f0c27a" stroke-width="1.8" /><rect x="1005" y="144.5" width="13" height="10" fill="#f0c27a" rx="1" /><path d="M1011.5 147v5M1010 148.5h3" fill="none" stroke="#fff" stroke-width="1.1" /><path d="M1024.3 130V156" fill="none" stroke="#a8bfe0" stroke-width="1" /><path d="M1038.500 138.500h11.300M1038.500 138.500v11M1038.500 149.600l11.300-11.100" fill="none" stroke="#3e78bc" stroke-width="1.1" /><circle cx="1038.5" cy="138.5" r="2.4" fill="#eef4fc" stroke="#6e6e6e" stroke-width="1.1"/><rect x="1047.8" y="136.5" width="4" height="4" fill="#eef4fc" stroke="#6e6e6e" stroke-width="1.1" /><rect x="1036.5" y="147.6" width="4" height="4" fill="#eef4fc" stroke="#6e6e6e" stroke-width="1.1" /><rect x="1063.5" y="134.5" width="20.5" height="18" fill="#fff" stroke="#6e6e6e" stroke-width="1.1" /><path d="M1068 137v4.500" fill="none" stroke="#5aa582" stroke-width="1.2" /><path d="M1071.500 137v4.500l-3-2.250z" fill="#5aa582" /><path d="M1071.500 144v4.500" fill="none" stroke="#d8432a" stroke-width="1.2" /><path d="M1068 144v4.500l3-2.250z" fill="#d8432a" /><rect x="1074.7" y="137.2" width="4" height="4" fill="#fff" stroke="#6e6e6e" stroke-width="1" /><rect x="1074.7" y="144.2" width="4" height="4" fill="#fff" stroke="#6e6e6e" stroke-width="1" /></svg>
<svg style="left:0px;top:0px;" width="1596" height="192" viewBox="0 0 1596 192"><defs><linearGradient id="tg" x1="0" y1="0" x2="0" y2="1"><stop offset="0" stop-color="#d3dff0"/><stop offset="1" stop-color="#c6d6ea"/></linearGradient></defs><path d="M-2 189.5 C1.5 189.5 2.5 186 3.5 183 L7 170 C8 166.5 9 164.5 12 164.5 L197.5 164.5 C200.5 164.5 201.5 166.5 202.5 170 L206.0 183 C207.0 186 208.0 189.5 211.5 189.5" fill="#edf2fb" stroke="#8fa9cf" stroke-width="1"/><path d="M203.5 189.5 C207.0 189.5 208.0 186 209.0 183 L212.5 170 C213.5 166.5 214.5 164.5 217.5 164.5 L297 164.5 C300 164.5 301 166.5 302 170 L305.5 183 C306.5 186 307.5 189.5 311 189.5" fill="#edf2fb" stroke="#8fa9cf" stroke-width="1"/><path d="M468 189.5 C471.5 189.5 472.5 186 473.5 183 L477 170 C478 166.5 479 164.5 482 164.5 L574 164.5 C577 164.5 578 166.5 579 170 L582.5 183 C583.5 186 584.5 189.5 588 189.5" fill="#edf2fb" stroke="#8fa9cf" stroke-width="1"/><path d="M0 189.5H1596" stroke="#7f99c4" stroke-width="1"/><path d="M303 189.5 C306.5 189.5 307.5 186 308.5 183 L312 170 C313 166.5 314 164.5 317 164.5 L461.5 164.5 C464.5 164.5 465.5 166.5 466.5 170 L470.0 183 C471.0 186 472.0 189.5 475.5 189.5" fill="url(#tg)" stroke="#8fa9cf" stroke-width="1"/></svg>
<span style="left:18px;top:171.75px;font-size:12.5px;line-height:12.5px;color:#333;letter-spacing:0.236px;-webkit-mask-image:linear-gradient(90deg,#000 85%,transparent);">AlibabaPuHuiTi-2-65-Mediu</span>
<span style="left:234px;top:171.75px;font-size:12.5px;line-height:12.5px;color:#333;letter-spacing:0.523px;">ariblk.ttf</span>
<span style="left:322px;top:171.75px;font-size:12.5px;line-height:12.5px;color:#111;letter-spacing:0.370px;">Glyph.893 - ariblk.ttf</span>
<span style="left:482px;top:171.75px;font-size:12.5px;line-height:12.5px;color:#333;letter-spacing:0.523px;">W - ariblk.ttf</span>
<svg style="left:183.5px;top:174.5px;" width="8" height="8" viewBox="0 0 8 8"><path d="M0.5 0.5l7 7M7.5 0.5l-7 7" stroke="#666" stroke-width="1" fill="none"/></svg>
<svg style="left:287.5px;top:174.5px;" width="8" height="8" viewBox="0 0 8 8"><path d="M0.5 0.5l7 7M7.5 0.5l-7 7" stroke="#666" stroke-width="1" fill="none"/></svg>
<svg style="left:446.5px;top:174.5px;" width="8" height="8" viewBox="0 0 8 8"><path d="M0.5 0.5l7 7M7.5 0.5l-7 7" stroke="#666" stroke-width="1" fill="none"/></svg>
<svg style="left:559.5px;top:174.5px;" width="8" height="8" viewBox="0 0 8 8"><path d="M0.5 0.5l7 7M7.5 0.5l-7 7" stroke="#666" stroke-width="1" fill="none"/></svg>
<svg style="left:219px;top:172.5px;" width="10" height="10" viewBox="0 0 10 10"><circle cx="5" cy="5" r="3" fill="none" stroke="#e8772e" stroke-width="2"/><path d="M5 0v10M0 5h10M1.5 1.5l7 7M8.5 1.5l-7 7" stroke="#e8772e" stroke-width="1.3"/><circle cx="5" cy="5" r="1.3" fill="#edf2fb"/></svg>
<span style="left:8px;top:201.75px;font-size:12.5px;line-height:12.5px;color:#1a1a1a;letter-spacing:0.264px;">ariblk.ttf - Arial Black - Simple - Glyph Index: 893 - Name: Glyph.893</span>
<div style="left:412px;top:203px;width:500px;height:8px;background-image:conic-gradient(#c9c9c9 25%,transparent 0 50%,#c9c9c9 0 75%,transparent 0);background-size:2px 2px;"></div>
<div style="left:3px;top:218px;width:900px;height:19px;background:#eef4fc;"></div>
<div style="left:3px;top:218px;width:18px;height:432px;background:#eef4fc;"></div>
<div style="left:517px;top:218px;width:244px;height:17px;background:#cfdff0;"></div>
<div style="left:21px;top:236px;width:882px;height:398px;background:#fff;"></div>
<div style="left:21px;top:634px;width:882px;height:16px;background:#eef4fc;"></div>
<svg style="left:23px;top:634px;" width="10" height="12" viewBox="0 0 10 12"><path d="M8 1.500v8.500L2 5.750z" fill="#8b9cc4"/></svg>
<div style="left:674px;top:639px;width:18px;height:2px;background:#8b9cc4;"></div>
<div style="left:3px;top:650px;width:1275px;height:6px;background:#c8ccdb;"></div>
<svg style="left:0px;top:0px;" width="904" height="656" viewBox="0 0 904 656"><path d="M20 235.5H903" stroke="#111" stroke-width="1.2"/><path d="M20.5 235V650" stroke="#111" stroke-width="1.2"/><rect x="29" y="233" width="1.7" height="3" fill="#c6c6c6"/><rect x="35" y="233" width="1.7" height="3" fill="#c6c6c6"/><rect x="41" y="231" width="1.7" height="5" fill="#c6c6c6"/><rect x="48" y="233" width="1.7" height="3" fill="#c6c6c6"/><rect x="54" y="233" width="1.7" height="3" fill="#c6c6c6"/><rect x="60" y="233" width="1.7" height="3" fill="#c6c6c6"/><rect x="67" y="233" width="1.7" height="3" fill="#c6c6c6"/><rect x="73" y="230" width="1.7" height="6" fill="#c6c6c6"/><rect x="79" y="233" width="1.7" height="3" fill="#c6c6c6"/><rect x="86" y="233" width="1.7" height="3" fill="#c6c6c6"/><rect x="92" y="233" width="1.7" height="3" fill="#c6c6c6"/><rect x="98" y="233" width="1.7" height="3" fill="#c6c6c6"/><rect x="105" y="231" width="1.7" height="5" fill="#c6c6c6"/><rect x="111" y="233" width="1.7" height="3" fill="#c6c6c6"/><rect x="117" y="233" width="1.7" height="3" fill="#c6c6c6"/><rect x="124" y="233" width="1.7" height="3" fill="#c6c6c6"/><rect x="130" y="233" width="1.7" height="3" fill="#c6c6c6"/><rect x="136" y="230" width="1.7" height="6" fill="#c6c6c6"/><rect x="143" y="233" width="1.7" height="3" fill="#c6c6c6"/><rect x="149" y="233" width="1.7" height="3" fill="#c6c6c6"/><rect x="155" y="233" width="1.7" height="3" fill="#c6c6c6"/><rect x="162" y="233" width="1.7" height="3" fill="#c6c6c6"/><rect x="168" y="231" width="1.7" height="5" fill="#c6c6c6"/><rect x="174" y="233" width="1.7" height="3" fill="#c6c6c6"/><rect x="181" y="233" width="1.7" height="3" fill="#c6c6c6"/><rect x="187" y="233" width="1.7" height="3" fill="#c6c6c6"/><rect x="193" y="233" width="1.7" height="3" fill="#c6c6c6"/><rect x="200" y="230" width="1.7" height="6" fill="#c6c6c6"/><rect x="206" y="233" width="1.7" height="3" fill="#c6c6c6"/><rect x="212" y="233" width="1.7" height="3" fill="#c6c6c6"/><rect x="219" y="233" width="1.7" height="3" fill="#c6c6c6"/><rect x="225" y="233" width="1.7" height="3" fill="#c6c6c6"/><rect x="232" y="231" width="1.7" height="5" fill="#c6c6c6"/><rect x="238" y="233" width="1.7" height="3" fill="#c6c6c6"/><rect x="244" y="233" width="1.7" height="3" fill="#c6c6c6"/><rect x="251" y="233" width="1.7" height="3" fill="#c6c6c6"/><rect x="257" y="233" width="1.7" height="3" fill="#c6c6c6"/><rect x="263" y="230" width="1.7" height="6" fill="#c6c6c6"/><rect x="270" y="233" width="1.7" height="3" fill="#c6c6c6"/><rect x="276" y="233" width="1.7" height="3" fill="#c6c6c6"/><rect x="282" y="233" width="1.7" height="3" fill="#c6c6c6"/><rect x="289" y="233" width="1.7" height="3" fill="#c6c6c6"/><rect x="295" y="231" width="1.7" height="5" fill="#c6c6c6"/><rect x="301" y="233" width="1.7" height="3" fill="#c6c6c6"/><rect x="308" y="233" width="1.7" height="3" fill="#c6c6c6"/><rect x="314" y="233" width="1.7" height="3" fill="#c6c6c6"/><rect x="320" y="233" width="1.7" height="3" fill="#c6c6c6"/><rect x="327" y="230" width="1.7" height="6" fill="#c6c6c6"/><rect x="333" y="233" width="1.7" height="3" fill="#c6c6c6"/><rect x="339" y="233" width="1.7" height="3" fill="#c6c6c6"/><rect x="346" y="233" width="1.7" height="3" fill="#c6c6c6"/><rect x="352" y="233" width="1.7" height="3" fill="#c6c6c6"/><rect x="358" y="231" width="1.7" height="5" fill="#c6c6c6"/><rect x="365" y="233" width="1.7" height="3" fill="#c6c6c6"/><rect x="371" y="233" width="1.7" height="3" fill="#c6c6c6"/><rect x="377" y="233" width="1.7" height="3" fill="#c6c6c6"/><rect x="384" y="233" width="1.7" height="3" fill="#c6c6c6"/><rect x="390" y="230" width="1.7" height="6" fill="#c6c6c6"/><rect x="396" y="233" width="1.7" height="3" fill="#c6c6c6"/><rect x="403" y="233" width="1.7" height="3" fill="#c6c6c6"/><rect x="409" y="233" width="1.7" height="3" fill="#c6c6c6"/><rect x="415" y="233" width="1.7" height="3" fill="#c6c6c6"/><rect x="422" y="231" width="1.7" height="5" fill="#c6c6c6"/><rect x="428" y="233" width="1.7" height="3" fill="#c6c6c6"/><rect x="434" y="233" width="1.7" height="3" fill="#c6c6c6"/><rect x="441" y="233" width="1.7" height="3" fill="#c6c6c6"/><rect x="447" y="233" width="1.7" height="3" fill="#c6c6c6"/><rect x="453" y="230" width="1.7" height="6" fill="#c6c6c6"/><rect x="460" y="233" width="1.7" height="3" fill="#c6c6c6"/><rect x="466" y="233" width="1.7" height="3" fill="#c6c6c6"/><rect x="472" y="233" width="1.7" height="3" fill="#c6c6c6"/><rect x="479" y="233" width="1.7" height="3" fill="#c6c6c6"/><rect x="485" y="231" width="1.7" height="5" fill="#c6c6c6"/><rect x="491" y="233" width="1.7" height="3" fill="#c6c6c6"/><rect x="498" y="233" width="1.7" height="3" fill="#c6c6c6"/><rect x="504" y="233" width="1.7" height="3" fill="#c6c6c6"/><rect x="510" y="233" width="1.7" height="3" fill="#c6c6c6"/><rect x="517" y="230" width="1.7" height="6" fill="#c6c6c6"/><rect x="523" y="233" width="1.7" height="3" fill="#c6c6c6"/><rect x="529" y="233" width="1.7" height="3" fill="#c6c6c6"/><rect x="536" y="233" width="1.7" height="3" fill="#c6c6c6"/><rect x="542" y="233" width="1.7" height="3" fill="#c6c6c6"/><rect x="549" y="231" width="1.7" height="5" fill="#c6c6c6"/><rect x="555" y="233" width="1.7" height="3" fill="#c6c6c6"/><rect x="561" y="233" width="1.7" height="3" fill="#c6c6c6"/><rect x="568" y="233" width="1.7" height="3" fill="#c6c6c6"/><rect x="574" y="233" width="1.7" height="3" fill="#c6c6c6"/><rect x="580" y="230" width="1.7" height="6" fill="#c6c6c6"/><rect x="587" y="233" width="1.7" height="3" fill="#c6c6c6"/><rect x="593" y="233" width="1.7" height="3" fill="#c6c6c6"/><rect x="599" y="233" width="1.7" height="3" fill="#c6c6c6"/><rect x="606" y="233" width="1.7" height="3" fill="#c6c6c6"/><rect x="612" y="231" width="1.7" height="5" fill="#c6c6c6"/><rect x="618" y="233" width="1.7" height="3" fill="#c6c6c6"/><rect x="625" y="233" width="1.7" height="3" fill="#c6c6c6"/><rect x="631" y="233" width="1.7" height="3" fill="#c6c6c6"/><rect x="637" y="233" width="1.7" height="3" fill="#c6c6c6"/><rect x="644" y="230" width="1.7" height="6" fill="#c6c6c6"/><rect x="650" y="233" width="1.7" height="3" fill="#c6c6c6"/><rect x="656" y="233" width="1.7" height="3" fill="#c6c6c6"/><rect x="663" y="233" width="1.7" height="3" fill="#c6c6c6"/><rect x="669" y="233" width="1.7" height="3" fill="#c6c6c6"/><rect x="675" y="231" width="1.7" height="5" fill="#c6c6c6"/><rect x="682" y="233" width="1.7" height="3" fill="#c6c6c6"/><rect x="688" y="233" width="1.7" height="3" fill="#c6c6c6"/><rect x="694" y="233" width="1.7" height="3" fill="#c6c6c6"/><rect x="701" y="233" width="1.7" height="3" fill="#c6c6c6"/><rect x="707" y="230" width="1.7" height="6" fill="#c6c6c6"/><rect x="713" y="233" width="1.7" height="3" fill="#c6c6c6"/><rect x="720" y="233" width="1.7" height="3" fill="#c6c6c6"/><rect x="726" y="233" width="1.7" height="3" fill="#c6c6c6"/><rect x="732" y="233" width="1.7" height="3" fill="#c6c6c6"/><rect x="739" y="231" width="1.7" height="5" fill="#c6c6c6"/><rect x="745" y="233" width="1.7" height="3" fill="#c6c6c6"/><rect x="751" y="233" width="1.7" height="3" fill="#c6c6c6"/><rect x="758" y="233" width="1.7" height="3" fill="#c6c6c6"/><rect x="764" y="233" width="1.7" height="3" fill="#c6c6c6"/><rect x="770" y="230" width="1.7" height="6" fill="#c6c6c6"/><rect x="777" y="233" width="1.7" height="3" fill="#c6c6c6"/><rect x="783" y="233" width="1.7" height="3" fill="#c6c6c6"/><rect x="789" y="233" width="1.7" height="3" fill="#c6c6c6"/><rect x="796" y="233" width="1.7" height="3" fill="#c6c6c6"/><rect x="802" y="231" width="1.7" height="5" fill="#c6c6c6"/><rect x="808" y="233" width="1.7" height="3" fill="#c6c6c6"/><rect x="815" y="233" width="1.7" height="3" fill="#c6c6c6"/><rect x="821" y="233" width="1.7" height="3" fill="#c6c6c6"/><rect x="827" y="233" width="1.7" height="3" fill="#c6c6c6"/><rect x="834" y="230" width="1.7" height="6" fill="#c6c6c6"/><rect x="840" y="233" width="1.7" height="3" fill="#c6c6c6"/><rect x="846" y="233" width="1.7" height="3" fill="#c6c6c6"/><rect x="853" y="233" width="1.7" height="3" fill="#c6c6c6"/><rect x="859" y="233" width="1.7" height="3" fill="#c6c6c6"/><rect x="866" y="231" width="1.7" height="5" fill="#c6c6c6"/><rect x="872" y="233" width="1.7" height="3" fill="#c6c6c6"/><rect x="878" y="233" width="1.7" height="3" fill="#c6c6c6"/><rect x="885" y="233" width="1.7" height="3" fill="#c6c6c6"/><rect x="891" y="233" width="1.7" height="3" fill="#c6c6c6"/><rect x="897" y="230" width="1.7" height="6" fill="#c6c6c6"/><rect x="904" y="233" width="1.7" height="3" fill="#c6c6c6"/><path d="M17.5 640H21V641.7H20z" fill="#c2c2c2"/><path d="M17.5 627H21V628.7H20z" fill="#c2c2c2"/><path d="M17.5 614H21V615.7H20z" fill="#c2c2c2"/><path d="M17.5 601H21V602.7H20z" fill="#c2c2c2"/><path d="M17.5 589H21V590.7H20z" fill="#c2c2c2"/><path d="M17.5 576H21V577.7H20z" fill="#c2c2c2"/><path d="M17.5 563H21V564.7H20z" fill="#c2c2c2"/><path d="M17.5 551H21V552.7H20z" fill="#c2c2c2"/><path d="M15 538H21V539.7H20z" fill="#c2c2c2"/><path d="M17.5 525H21V526.7H20z" fill="#c2c2c2"/><path d="M17.5 513H21V514.7H20z" fill="#c2c2c2"/><path d="M17.5 500H21V501.7H20z" fill="#c2c2c2"/><path d="M17.5 487H21V488.7H20z" fill="#c2c2c2"/><path d="M17.5 475H21V476.7H20z" fill="#c2c2c2"/><path d="M17.5 462H21V463.7H20z" fill="#c2c2c2"/><path d="M17.5 449H21V450.7H20z" fill="#c2c2c2"/><path d="M17.5 437H21V438.7H20z" fill="#c2c2c2"/><path d="M17.5 424H21V425.7H20z" fill="#c2c2c2"/><path d="M15 411H21V412.7H20z" fill="#c2c2c2"/><path d="M17.5 399H21V400.7H20z" fill="#c2c2c2"/><path d="M17.5 386H21V387.7H20z" fill="#c2c2c2"/><path d="M17.5 373H21V374.7H20z" fill="#c2c2c2"/><path d="M17.5 361H21V362.7H20z" fill="#c2c2c2"/><path d="M17.5 348H21V349.7H20z" fill="#c2c2c2"/><path d="M17.5 335H21V336.7H20z" fill="#c2c2c2"/><path d="M17.5 323H21V324.7H20z" fill="#c2c2c2"/><path d="M17.5 310H21V311.7H20z" fill="#c2c2c2"/><path d="M17.5 297H21V298.7H20z" fill="#c2c2c2"/><path d="M15 284H21V285.7H20z" fill="#c2c2c2"/><path d="M17.5 272H21V273.7H20z" fill="#c2c2c2"/><path d="M17.5 259H21V260.7H20z" fill="#c2c2c2"/><path d="M17.5 246H21V247.7H20z" fill="#c2c2c2"/><path d="M6 404.5H21" stroke="#111" stroke-width="1" stroke-dasharray="3 1.5"/><path d="M21 251.5H903" stroke="#e2691e" stroke-width="1" stroke-dasharray="3 3"/><path d="M21 351.5H903" stroke="#e2691e" stroke-width="1" stroke-dasharray="3 3"/><path d="M21 402.5H903" stroke="#e2691e" stroke-width="1" stroke-dasharray="3 3"/><path d="M21 537.5H903" stroke="#e2691e" stroke-width="1" stroke-dasharray="3 3"/><path d="M21 617.5H903" stroke="#e2691e" stroke-width="1" stroke-dasharray="3 3"/><path d="M516.5 237V634" stroke="#e2691e" stroke-width="1" stroke-dasharray="3 3"/><path d="M760.5 237V634" stroke="#e2691e" stroke-width="1" stroke-dasharray="3 3"/><path d="M511 236h6v6a6 6 0 0 1-6-6z" fill="#f0a878"/><path d="M761 236h6a6 6 0 0 1-6 6z" fill="#f0a878"/><path d="M522.6 393.6 L535.0 393.6 C563.2 393.6 579.6 400.8 591.5 420.7 C599.5 435.2 603.1 446.1 614.0 447.2 L614.0 393.6 L664.7 393.6 L664.7 447.2 C675.6 446.1 679.2 435.2 687.2 420.7 C699.2 400.8 715.5 393.6 743.8 393.6 L755.4 393.6 L755.4 429.8 C740.9 430.5 735.4 435.2 728.2 446.1 C722.0 455.2 717.3 460.6 708.2 462.8 C719.1 467.1 726.4 475.1 731.8 485.3 L760.1 537.5 L703.5 537.5 L682.1 495.1 C677.4 486.0 673.8 481.3 664.7 481.3 L664.7 537.5 L614.0 537.5 L614.0 481.3 C604.9 481.3 601.3 486.0 596.6 495.1 L575.2 537.5 L517.9 537.5 L546.9 485.3 C552.4 475.1 559.6 467.1 570.5 462.8 C561.4 460.6 556.7 455.2 550.6 446.1 C543.3 435.2 537.9 430.5 522.6 429.8 Z" fill="#e6e6e6" stroke="#222" stroke-width="1"/></svg>
<span style="left:60.94999999999999px;top:219.50px;font-size:10px;line-height:10px;color:#333;letter-spacing:-0.416px;">-3500</span>
<span style="left:124.35000000000002px;top:219.50px;font-size:10px;line-height:10px;color:#333;letter-spacing:-0.416px;">-3000</span>
<span style="left:187.75px;top:219.50px;font-size:10px;line-height:10px;color:#333;letter-spacing:-0.416px;">-2500</span>
<span style="left:251.14999999999998px;top:219.50px;font-size:10px;line-height:10px;color:#333;letter-spacing:-0.416px;">-2000</span>
<span style="left:314.55px;top:219.50px;font-size:10px;line-height:10px;color:#333;letter-spacing:-0.416px;">-1500</span>
<span style="left:377.95px;top:219.50px;font-size:10px;line-height:10px;color:#333;letter-spacing:-0.416px;">-1000</span>
<span style="left:443.35px;top:219.50px;font-size:10px;line-height:10px;color:#333;letter-spacing:-0.129px;">-500</span>
<span style="left:514.25px;top:219.50px;font-size:10px;line-height:10px;color:#333;letter-spacing:-0.062px;">0</span>
<span style="left:572.9px;top:219.50px;font-size:10px;line-height:10px;color:#333;letter-spacing:-0.562px;">500</span>
<span style="left:634.05px;top:219.50px;font-size:10px;line-height:10px;color:#333;letter-spacing:-0.688px;">1000</span>
<span style="left:697.45px;top:219.50px;font-size:10px;line-height:10px;color:#333;letter-spacing:-0.688px;">1500</span>
<span style="left:760.85px;top:219.50px;font-size:10px;line-height:10px;color:#333;letter-spacing:-0.688px;">2000</span>
<span style="left:824.25px;top:219.50px;font-size:10px;line-height:10px;color:#333;letter-spacing:-0.688px;">2500</span>
<span style="left:887.65px;top:219.50px;font-size:10px;line-height:10px;color:#333;letter-spacing:-0.688px;">3000</span>
<span style="left:7px;top:267.50px;font-size:9px;line-height:9px;color:#222;">2</span>
<span style="left:7px;top:277.25px;font-size:9px;line-height:9px;color:#222;">0</span>
<span style="left:7px;top:287.00px;font-size:9px;line-height:9px;color:#222;">0</span>
<span style="left:7px;top:296.75px;font-size:9px;line-height:9px;color:#222;">0</span>
<span style="left:7px;top:395.00px;font-size:9px;line-height:9px;color:#222;">1</span>
<span style="left:7px;top:404.80px;font-size:9px;line-height:9px;color:#222;">0</span>
<span style="left:7px;top:414.60px;font-size:9px;line-height:9px;color:#222;">0</span>
<span style="left:7px;top:424.40px;font-size:9px;line-height:9px;color:#222;">0</span>
<span style="left:7px;top:535.50px;font-size:9px;line-height:9px;color:#222;">0</span>
<span style="left:25px;top:238.74px;font-size:10.5px;line-height:10.5px;color:#6a6a6a;letter-spacing:0.109px;">WinAscent 2254</span>
<span style="left:25px;top:338.66px;font-size:10.5px;line-height:10.5px;color:#6a6a6a;letter-spacing:0.079px;">CapHeight 1466</span>
<span style="left:25px;top:389.89px;font-size:10.5px;line-height:10.5px;color:#6a6a6a;letter-spacing:0.202px;">x-Height 1062</span>
<span style="left:25px;top:524.55px;font-size:10.5px;line-height:10.5px;color:#6a6a6a;letter-spacing:-0.105px;">Baseline 0</span>
<span style="left:25px;top:604.94px;font-size:10.5px;line-height:10.5px;color:#6a6a6a;letter-spacing:0.097px;">WinDescent -634</span>
<span style="left:8px;top:661.75px;font-size:12.5px;line-height:12.5px;color:#333;letter-spacing:-0.067px;">Preview</span>
<div style="left:60px;top:664px;width:1212px;height:8px;background-image:conic-gradient(#c9c9c9 25%,transparent 0 50%,#c9c9c9 0 75%,transparent 0);background-size:2px 2px;"></div>
<div style="left:3px;top:678px;width:1275px;height:122px;background:#f5f5f5;"></div>
<div style="left:7px;top:682px;width:104px;height:24px;background:#fff;border:1px solid #b9cfea;border-radius:2px;"></div>
<span style="left:12px;top:687.75px;font-size:12.5px;line-height:12.5px;color:#1a1a1a;letter-spacing:0.070px;">Auto</span>
<svg style="left:97px;top:691.5px;" width="8" height="5" viewBox="0 0 8 5"><path d="M0.5 0.5l3.5 3.5l3.5-3.5" stroke="#7a88a6" fill="none" stroke-width="1"/></svg>
<div style="left:117px;top:682px;width:104px;height:24px;background:#fff;border:1px solid #b9cfea;border-radius:2px;"></div>
<span style="left:122px;top:687.75px;font-size:12.5px;line-height:12.5px;color:#1a1a1a;letter-spacing:0.070px;">Auto</span>
<svg style="left:207px;top:691.5px;" width="8" height="5" viewBox="0 0 8 5"><path d="M0.5 0.5l3.5 3.5l3.5-3.5" stroke="#7a88a6" fill="none" stroke-width="1"/></svg>
<div style="left:227px;top:682px;width:104px;height:24px;background:#fff;border:1px solid #b9cfea;border-radius:2px;"></div>
<span style="left:232px;top:687.75px;font-size:12.5px;line-height:12.5px;color:#1a1a1a;letter-spacing:0.199px;">Default</span>
<svg style="left:317px;top:691.5px;" width="8" height="5" viewBox="0 0 8 5"><path d="M0.5 0.5l3.5 3.5l3.5-3.5" stroke="#7a88a6" fill="none" stroke-width="1"/></svg>
<div style="left:335px;top:682px;width:49px;height:24px;background:#fff;border:1px solid #b9cfea;border-radius:2px;"></div>
<span style="left:357.3px;top:687.75px;font-size:12.5px;line-height:12.5px;color:#1a1a1a;letter-spacing:-0.453px;">0</span>
<svg style="left:370px;top:686px;" width="8" height="16" viewBox="0 0 8 16"><path d="M1 5l3-3l3 3M1 11.500l3 3l3-3" stroke="#222" fill="none" stroke-width="1.2"/></svg>
<div style="left:393px;top:682px;width:57px;height:24px;background:#fff;border:1px solid #b9cfea;border-radius:2px;"></div>
<span style="left:416.4px;top:687.75px;font-size:12.5px;line-height:12.5px;color:#1a1a1a;letter-spacing:-0.453px;">32</span>
<svg style="left:436px;top:686px;" width="8" height="16" viewBox="0 0 8 16"><path d="M1 5l3-3l3 3M1 11.500l3 3l3-3" stroke="#222" fill="none" stroke-width="1.2"/></svg>
<span style="left:464.5px;top:686.25px;font-size:11.5px;line-height:11.5px;color:#444;text-decoration:underline;">U</span>
<span style="left:490.5px;top:686.25px;font-size:11.5px;line-height:11.5px;color:#444;text-decoration:line-through;">S</span>
<div style="left:524px;top:685px;width:15px;height:15px;background:#fff;border:1px solid #8a8a8a;"></div>
<div style="left:524px;top:685px;width:15px;height:3px;background:#4a7bc0;"></div>
<svg style="left:526px;top:689px;" width="11" height="9" viewBox="0 0 11 9"><path d="M1.5 4.5l3 3l5-6" stroke="#3b74c4" stroke-width="1.8" fill="none"/></svg>
<div style="left:555px;top:682px;width:716px;height:24px;background:#fff;border:1px solid #b9cfea;border-radius:2px;"></div>
<span style="left:558px;top:687.75px;font-size:12.5px;line-height:12.5px;color:#1a1a1a;letter-spacing:0.333px;">The quick brown fox.</span>
<div style="left:3px;top:707px;width:200px;height:95px;background:#fff;border:1px solid #b9cfea;"></div>
<div style="left:10px;top:711px;width:13px;height:13px;background:#4c6fe0;border-radius:2px;"></div>
<svg style="left:12px;top:714px;" width="9" height="7" viewBox="0 0 9 7"><path d="M1 3.5l2.5 2.5l4.5-5" stroke="#fff" stroke-width="1.4" fill="none"/></svg>
<div style="left:108px;top:711px;width:13px;height:13px;background:#fff;border:1px solid #8f8f8f;border-radius:2px;"></div>
<span style="left:30.3px;top:711.55px;font-size:12.5px;line-height:12.5px;color:#1a1a1a;letter-spacing:-0.027px;">_shaper</span>
<span style="left:128.2px;top:711.55px;font-size:12.5px;line-height:12.5px;color:#1a1a1a;letter-spacing:0.289px;">frac</span>
<div style="left:10px;top:728px;width:13px;height:13px;background:#fff;border:1px solid #8f8f8f;border-radius:2px;"></div>
<div style="left:108px;top:728px;width:13px;height:13px;background:#fff;border:1px solid #8f8f8f;border-radius:2px;"></div>
<span style="left:30.3px;top:728.55px;font-size:12.5px;line-height:12.5px;color:#1a1a1a;letter-spacing:-0.176px;">c2sc</span>
<span style="left:128.2px;top:728.55px;font-size:12.5px;line-height:12.5px;color:#1a1a1a;letter-spacing:0.168px;">kern</span>
<div style="left:10px;top:745px;width:13px;height:13px;background:#fff;border:1px solid #8f8f8f;border-radius:2px;"></div>
<div style="left:108px;top:745px;width:13px;height:13px;background:#fff;border:1px solid #8f8f8f;border-radius:2px;"></div>
<span style="left:30.3px;top:745.55px;font-size:12.5px;line-height:12.5px;color:#1a1a1a;letter-spacing:-0.352px;">case</span>
<span style="left:128.2px;top:745.55px;font-size:12.5px;line-height:12.5px;color:#1a1a1a;letter-spacing:-0.023px;">lnum</span>
<div style="left:10px;top:762px;width:13px;height:13px;background:#fff;border:1px solid #8f8f8f;border-radius:2px;"></div>
<div style="left:108px;top:762px;width:13px;height:13px;background:#fff;border:1px solid #8f8f8f;border-radius:2px;"></div>
<span style="left:30.3px;top:762.55px;font-size:12.5px;line-height:12.5px;color:#1a1a1a;letter-spacing:0.398px;">cpsp</span>
<span style="left:128.2px;top:762.55px;font-size:12.5px;line-height:12.5px;color:#1a1a1a;letter-spacing:0.309px;">locl</span>
<div style="left:10px;top:779px;width:13px;height:13px;background:#fff;border:1px solid #8f8f8f;border-radius:2px;"></div>
<div style="left:108px;top:779px;width:13px;height:13px;background:#fff;border:1px solid #8f8f8f;border-radius:2px;"></div>
<span style="left:30.3px;top:779.55px;font-size:12.5px;line-height:12.5px;color:#1a1a1a;letter-spacing:0.430px;">dnom</span>
<span style="left:128.2px;top:779.55px;font-size:12.5px;line-height:12.5px;color:#1a1a1a;letter-spacing:0.379px;">numr</span>
<div style="left:203px;top:707px;width:5px;height:93px;background:#eaf2fb;"></div>
<div style="left:204px;top:748px;width:1px;height:1px;background:#b8c4dc;"></div>
<div style="left:204px;top:751px;width:1px;height:1px;background:#b8c4dc;"></div>
<div style="left:204px;top:754px;width:1px;height:1px;background:#b8c4dc;"></div>
<div style="left:204px;top:757px;width:1px;height:1px;background:#b8c4dc;"></div>
<div style="left:204px;top:760px;width:1px;height:1px;background:#b8c4dc;"></div>
<div style="left:204px;top:763px;width:1px;height:1px;background:#b8c4dc;"></div>
<div style="left:204px;top:766px;width:1px;height:1px;background:#b8c4dc;"></div>
<div style="left:204px;top:769px;width:1px;height:1px;background:#b8c4dc;"></div>
<div style="left:204px;top:772px;width:1px;height:1px;background:#b8c4dc;"></div>
<div style="left:208px;top:707px;width:1048px;height:87px;background:#fff;"></div>
<div style="left:1256px;top:707px;width:15px;height:87px;background:#eef4fc;"></div>
<div style="left:208px;top:794px;width:1063px;height:1px;background:#b9cfea;"></div>
<div style="left:208px;top:795px;width:1063px;height:5px;background:#fff;"></div>
<svg style="left:1259px;top:782px;" width="8" height="6" viewBox="0 0 8 6"><path d="M0 0h8L4 6z" fill="#7f97c4"/></svg>
<span style="left:216.3px;top:725.50px;font-size:41px;line-height:41px;color:#000;transform:scaleX(1.1713);transform-origin:0 0;word-spacing:2.2px;font-weight:bold;-webkit-text-stroke:1.7px #000;">The quick brown fox.</span>
<span style="left:1430.5px;top:201.75px;font-size:12.5px;line-height:12.5px;color:#1a1a1a;letter-spacing:-0.049px;">lyph.893)</span>
<div style="left:1490px;top:203px;width:63px;height:8px;background-image:conic-gradient(#c9c9c9 25%,transparent 0 50%,#c9c9c9 0 75%,transparent 0);background-size:2px 2px;"></div>
<svg style="left:1561px;top:201px;" width="8" height="11" viewBox="0 0 8 11"><path d="M2 0.8h4M2.6 1v5M5.6 1v5M5 1v5M0.5 6.3h7M4 6.5v4.5" stroke="#111" stroke-width="1.1" fill="none"/></svg>
<svg style="left:1575px;top:202px;" width="10" height="9" viewBox="0 0 10 9"><path d="M1 0.5l8 8M9 0.5l-8 8" stroke="#111" stroke-width="1.7" fill="none"/></svg>
<div style="left:1278px;top:218px;width:313px;height:375px;background:#f5f5f5;"></div>
<div style="left:1340px;top:226px;width:220px;height:24px;background:#fff;border:1px solid #b9cfea;border-radius:2px;"></div>
<div style="left:1340px;top:254px;width:193px;height:24px;background:#fff;border:1px solid #b9cfea;border-radius:2px;"></div>
<svg style="left:1568px;top:227px;" width="17" height="18" viewBox="0 0 17 18"><path d="M4 2l11 9-2 2.5L2.5 4z" fill="#6e6e6e"/><path d="M3 1.5l1.8 1.6" stroke="#444" stroke-width="2"/><path d="M2 9l.8 1.6 1.7.2-1.2 1.2.3 1.7L2 12.9l-1.6.8.3-1.7L-.5 10.8l1.7-.2z M6 12.5l.8 1.6 1.7.2-1.2 1.2.3 1.7-1.6-.8-1.6.8.3-1.7-1.2-1.2 1.7-.2z" fill="#f0b45a"/></svg>
<svg style="left:1568px;top:256px;" width="17" height="18" viewBox="0 0 17 18"><path d="M4 2l11 9-2 2.5L2.5 4z" fill="#6e6e6e"/><path d="M3 1.5l1.8 1.6" stroke="#444" stroke-width="2"/><path d="M2 9l.8 1.6 1.7.2-1.2 1.2.3 1.7L2 12.9l-1.6.8.3-1.7L-.5 10.8l1.7-.2z M6 12.5l.8 1.6 1.7.2-1.2 1.2.3 1.7-1.6-.8-1.6.8.3-1.7-1.2-1.2 1.7-.2z" fill="#f0b45a"/></svg>
<svg style="left:1541px;top:256px;" width="16" height="16" viewBox="0 0 16 16"><rect x="0" y="0" width="16" height="12.5" fill="#d8202a"/><path d="M2.2 1v7.2q0 2 2 2t2-2V1M8.5 10.5V1l5 9.5V1" stroke="#fff" stroke-width="1.7" fill="none"/><rect x="0.5" y="13.3" width="15" height="2" fill="#333"/></svg>
<div style="left:1340px;top:310px;width:112px;height:24px;background:#fff;border:1px solid #b9cfea;border-radius:2px;"></div>
<svg style="left:1438px;top:319.5px;" width="8" height="5" viewBox="0 0 8 5"><path d="M0.5 0.5l3.5 3.5l3.5-3.5" stroke="#7a88a6" fill="none" stroke-width="1"/></svg>
<div style="left:1340px;top:338px;width:247px;height:24px;background:#fff;border:1px solid #b9cfea;border-radius:2px;"></div>
<div style="left:1340px;top:366px;width:247px;height:24px;background:#fff;border:1px solid #b9cfea;border-radius:2px;"></div>
<div style="left:1340px;top:394px;width:247px;height:24px;background:#fff;border:1px solid #b9cfea;border-radius:2px;"></div>
<div style="left:1340px;top:422px;width:132px;height:24px;background:#fff;border:1px solid #b9cfea;border-radius:2px;"></div>
<svg style="left:1458px;top:431.5px;" width="8" height="5" viewBox="0 0 8 5"><path d="M0.5 0.5l3.5 3.5l3.5-3.5" stroke="#7a88a6" fill="none" stroke-width="1"/></svg>
<span style="left:1428.7px;top:427.75px;font-size:12.5px;line-height:12.5px;color:#1a1a1a;letter-spacing:-0.619px;">Tag</span>
<div style="left:1476px;top:422px;width:111px;height:24px;background:#fff;border:1px solid #b9cfea;border-radius:2px;"></div>
<span style="left:1481px;top:427.75px;font-size:12.5px;line-height:12.5px;color:#1a1a1a;letter-spacing:0.323px;">No Layer Tag</span>
<svg style="left:1573px;top:431.5px;" width="8" height="5" viewBox="0 0 8 5"><path d="M0.5 0.5l3.5 3.5l3.5-3.5" stroke="#7a88a6" fill="none" stroke-width="1"/></svg>
<div style="left:1340px;top:450px;width:247px;height:130px;background:#fff;border:1px solid #b9cfea;border-radius:2px;"></div>
<div style="left:1568px;top:451px;width:18px;height:111px;background:#eef4fc;"></div>
<div style="left:1341px;top:562px;width:245px;height:17px;background:#eef4fc;"></div>
<svg style="left:1573px;top:457px;" width="9" height="6" viewBox="0 0 9 6"><path d="M0 6h9L4.5 0z" fill="#aab6d2"/></svg>
<svg style="left:1573px;top:549px;" width="9" height="6" viewBox="0 0 9 6"><path d="M0 0h9L4.5 6z" fill="#aab6d2"/></svg>
<svg style="left:1556px;top:566px;" width="6" height="9" viewBox="0 0 6 9"><path d="M0 0v9L6 4.5z" fill="#aab6d2"/></svg>
<div style="left:1278px;top:593px;width:313px;height:6px;background:#c8ccdb;"></div>
<span style="left:1284px;top:604.75px;font-size:12.5px;line-height:12.5px;color:#1a1a1a;">Transform</span>
<div style="left:1345px;top:607px;width:208px;height:8px;background-image:conic-gradient(#c9c9c9 25%,transparent 0 50%,#c9c9c9 0 75%,transparent 0);background-size:2px 2px;"></div>
<svg style="left:1561px;top:604px;" width="8" height="11" viewBox="0 0 8 11"><path d="M2 0.8h4M2.6 1v5M5.6 1v5M5 1v5M0.5 6.3h7M4 6.5v4.5" stroke="#111" stroke-width="1.1" fill="none"/></svg>
<svg style="left:1575px;top:605px;" width="10" height="9" viewBox="0 0 10 9"><path d="M1 0.5l8 8M9 0.5l-8 8" stroke="#111" stroke-width="1.7" fill="none"/></svg>
<div style="left:1278px;top:621px;width:313px;height:179px;background:#f5f5f5;"></div>
<div style="left:1428px;top:631px;width:13px;height:13px;background:#fff;border:1px solid #d0d4dc;border-radius:50%;"></div>
<div style="left:1444px;top:631px;width:13px;height:13px;background:#fff;border:1px solid #d0d4dc;border-radius:50%;"></div>
<div style="left:1461px;top:631px;width:13px;height:13px;background:#fff;border:1px solid #d0d4dc;border-radius:50%;"></div>
<div style="left:1428px;top:647px;width:13px;height:13px;background:#fff;border:1px solid #d0d4dc;border-radius:50%;"></div>
<div style="left:1444px;top:647px;width:13px;height:13px;background:#fff;border:3.5px solid #c3cbe2;border-radius:50%;"></div>
<div style="left:1461px;top:647px;width:13px;height:13px;background:#fff;border:1px solid #d0d4dc;border-radius:50%;"></div>
<div style="left:1428px;top:663px;width:13px;height:13px;background:#fff;border:1px solid #d0d4dc;border-radius:50%;"></div>
<div style="left:1444px;top:663px;width:13px;height:13px;background:#fff;border:1px solid #d0d4dc;border-radius:50%;"></div>
<div style="left:1461px;top:663px;width:13px;height:13px;background:#fff;border:1px solid #d0d4dc;border-radius:50%;"></div>
<div style="left:1317px;top:686px;width:68px;height:24px;background:#fff;border:1px solid #b9cfea;border-radius:2px;"></div>
<div style="left:1426px;top:686px;width:68px;height:24px;background:#fff;border:1px solid #b9cfea;border-radius:2px;"></div>
<div style="left:1317px;top:714px;width:68px;height:24px;background:#fff;border:1px solid #b9cfea;border-radius:2px;"></div>
<div style="left:1426px;top:714px;width:68px;height:24px;background:#fff;border:1px solid #b9cfea;border-radius:2px;"></div>
<div style="left:1317px;top:742px;width:68px;height:24px;background:#fff;border:1px solid #b9cfea;border-radius:2px;"></div>
<div style="left:1426px;top:742px;width:68px;height:24px;background:#fff;border:1px solid #b9cfea;border-radius:2px;"></div>
<svg style="left:1292px;top:744px;" width="16" height="16" viewBox="0 0 16 16"><path d="M8 2.5a5.8 5.8 0 1 1-5.6 4.3" stroke="#c4c4c4" stroke-width="1.4" fill="none"/><path d="M5 0.5L8.3 2.6 5.5 5.3" stroke="#c4c4c4" stroke-width="1.4" fill="none"/><circle cx="8" cy="8.5" r="1.2" fill="#c4c4c4"/></svg>
<svg style="left:1400px;top:742px;" width="17" height="18" viewBox="0 0 17 18"><path d="M1 16l3.5-9h9L10 16z" fill="#dcdcdc" stroke="#c4c4c4"/><path d="M1.5 16V6h3" stroke="#c4c4c4" fill="none"/><path d="M6 4c3-2.5 6-2 8 0" stroke="#c4c4c4" stroke-width="1.4" fill="none"/><path d="M11.5 1l3 3-3.5 1.5" stroke="#c4c4c4" stroke-width="1.3" fill="none"/></svg>
<svg style="left:1292px;top:716px;" width="16" height="16" viewBox="0 0 16 16"><path d="M1.5 3v10M13.5 3v10" stroke="#c4c4c4" fill="none"/></svg>
<svg style="left:1400px;top:716px;" width="17" height="16" viewBox="0 0 17 16"><path d="M1 9h6V3" stroke="#c4c4c4" fill="none"/><path d="M12 4v7M9.5 8.5L12 11l2.5-2.5" stroke="#c4c4c4" fill="none"/></svg>
<div style="left:1317px;top:771px;width:13px;height:13px;background:#c5cde4;border-radius:2px;"></div>
<svg style="left:1319px;top:774px;" width="9" height="7" viewBox="0 0 9 7"><path d="M1 3.5l2.5 2.5l4.5-5" stroke="#fff" stroke-width="1.4" fill="none"/></svg>
<span style="left:1334.5px;top:770.75px;font-size:12.5px;line-height:12.5px;color:#8a8a8a;letter-spacing:0.265px;">Lock aspect ratio</span>
<div style="left:900px;top:199px;width:529px;height:522px;background:#eef4fc;border:1px solid #3248a6;border-radius:7px;overflow:hidden;box-shadow:0 1px 3px rgba(0,0,0,.15)"><div style="left:0;top:0;width:100%;height:31px;background:#3248a6"></div></div>
<span style="left:906px;top:210.05px;font-size:12.5px;line-height:12.5px;color:#fff;letter-spacing:-0.507px;">Select Character</span>
<svg style="left:1400px;top:210px;" width="10" height="10" viewBox="0 0 10 10"><path d="M0.5 0.5l9 9M9.5 0.5l-9 9" stroke="#fff" stroke-width="1" fill="none"/></svg>
<span style="left:918px;top:241.75px;font-size:12.5px;line-height:12.5px;color:#1a1a1a;letter-spacing:0.239px;">Unicode Blocks</span>
<div style="left:970px;top:254px;width:8px;height:1px;background:#1a1a1a;"></div>
<span style="left:918px;top:410.05px;font-size:12.5px;line-height:12.5px;color:#1a1a1a;letter-spacing:0.036px;">Characters</span>
<div style="left:918px;top:422.5px;width:8px;height:1px;background:#1a1a1a;"></div>
<div style="left:919px;top:256px;width:492px;height:148px;background:#fff;border:1px solid #b9cfea;border-radius:2px;"></div>
<div style="left:920px;top:257px;width:468px;height:23px;background:#f3f7fd;"></div>
<div style="left:920px;top:280px;width:468px;height:1px;background:#d5e2f3;"></div>
<div style="left:983px;top:257px;width:1px;height:23px;background:#d5e2f3;"></div>
<div style="left:1047px;top:257px;width:1px;height:23px;background:#d5e2f3;"></div>
<div style="left:1388px;top:257px;width:1px;height:23px;background:#d5e2f3;"></div>
<span style="left:927px;top:262.75px;font-size:12.5px;line-height:12.5px;color:#1a1a1a;letter-spacing:0.119px;">Start</span>
<span style="left:991px;top:262.75px;font-size:12.5px;line-height:12.5px;color:#1a1a1a;letter-spacing:0.070px;">Stop</span>
<span style="left:1055px;top:262.75px;font-size:12.5px;line-height:12.5px;color:#1a1a1a;letter-spacing:0.414px;">Name</span>
<div style="left:1392px;top:257px;width:18px;height:146px;background:#eef4fc;"></div>
<svg style="left:1395px;top:262.5px;" width="9" height="6" viewBox="0 0 9 6"><path d="M0 6h9L4.5 0z" fill="#8b9cc4"/></svg>
<svg style="left:1395px;top:391px;" width="9" height="6" viewBox="0 0 9 6"><path d="M0 0h9L4.5 6z" fill="#8b9cc4"/></svg>
<div style="left:1399px;top:274px;width:2px;height:8px;background:#8b9cc4;"></div>
<div style="left:920px;top:281px;width:468px;height:122px;overflow:hidden">
<div style="left:0px;top:0.5px;width:468px;height:20px;background:#d9d9d9;border-radius:2px;"></div>
<span style="left:6.5px;top:4.75px;font-size:12.5px;line-height:12.5px;color:#1a1a1a;letter-spacing:-0.286px;">$00</span>
<span style="left:70.5px;top:4.75px;font-size:12.5px;line-height:12.5px;color:#1a1a1a;letter-spacing:-0.516px;">$7F</span>
<span style="left:134.5px;top:4.75px;font-size:12.5px;line-height:12.5px;color:#1a1a1a;letter-spacing:-0.014px;">Basic Latin</span>
<span style="left:6.5px;top:25.75px;font-size:12.5px;line-height:12.5px;color:#1a1a1a;letter-spacing:-0.286px;">$80</span>
<span style="left:70.5px;top:25.75px;font-size:12.5px;line-height:12.5px;color:#1a1a1a;letter-spacing:-1.078px;">$FF</span>
<span style="left:134.5px;top:25.75px;font-size:12.5px;line-height:12.5px;color:#1a1a1a;letter-spacing:0.200px;">Latin-1 Supplement</span>
<span style="left:6.5px;top:46.75px;font-size:12.5px;line-height:12.5px;color:#1a1a1a;letter-spacing:-0.153px;">$0100</span>
<span style="left:70.5px;top:46.75px;font-size:12.5px;line-height:12.5px;color:#1a1a1a;letter-spacing:-0.491px;">$017F</span>
<span style="left:134.5px;top:46.75px;font-size:12.5px;line-height:12.5px;color:#1a1a1a;letter-spacing:0.131px;">Latin Extended-A</span>
<span style="left:6.5px;top:67.75px;font-size:12.5px;line-height:12.5px;color:#1a1a1a;letter-spacing:-0.153px;">$0180</span>
<span style="left:70.5px;top:67.75px;font-size:12.5px;line-height:12.5px;color:#1a1a1a;letter-spacing:-0.491px;">$024F</span>
<span style="left:134.5px;top:67.75px;font-size:12.5px;line-height:12.5px;color:#1a1a1a;letter-spacing:0.068px;">Latin Extended-B</span>
<span style="left:6.5px;top:88.75px;font-size:12.5px;line-height:12.5px;color:#1a1a1a;letter-spacing:-0.153px;">$0250</span>
<span style="left:70.5px;top:88.75px;font-size:12.5px;line-height:12.5px;color:#1a1a1a;letter-spacing:-0.369px;">$02AF</span>
<span style="left:134.5px;top:88.75px;font-size:12.5px;line-height:12.5px;color:#1a1a1a;letter-spacing:-0.011px;">IPA Extensions</span>
<span style="left:6.5px;top:109.75px;font-size:12.5px;line-height:12.5px;color:#1a1a1a;letter-spacing:-0.231px;">$02B0</span>
<span style="left:70.5px;top:109.75px;font-size:12.5px;line-height:12.5px;color:#1a1a1a;letter-spacing:-0.628px;">$02FF</span>
<span style="left:134.5px;top:109.75px;font-size:12.5px;line-height:12.5px;color:#1a1a1a;letter-spacing:0.300px;">Spacing Modifier Letters</span>
</div>
<div style="left:919px;top:424px;width:492px;height:248px;background:#fff;border:1px solid #b9cfea;border-radius:2px;"></div>
<div style="left:920px;top:425px;width:468px;height:23px;background:#f3f7fd;"></div>
<div style="left:920px;top:448px;width:468px;height:1px;background:#d5e2f3;"></div>
<div style="left:983px;top:425px;width:1px;height:23px;background:#d5e2f3;"></div>
<div style="left:1047px;top:425px;width:1px;height:23px;background:#d5e2f3;"></div>
<div style="left:1388px;top:425px;width:1px;height:23px;background:#d5e2f3;"></div>
<span style="left:927px;top:430.75px;font-size:12.5px;line-height:12.5px;color:#1a1a1a;letter-spacing:0.191px;">Value</span>
<span style="left:991px;top:430.75px;font-size:12.5px;line-height:12.5px;color:#1a1a1a;letter-spacing:0.069px;">Glyph</span>
<span style="left:1055px;top:430.75px;font-size:12.5px;line-height:12.5px;color:#1a1a1a;letter-spacing:0.414px;">Name</span>
<div style="left:1392px;top:425px;width:18px;height:246px;background:#eef4fc;"></div>
<svg style="left:1395px;top:430.5px;" width="9" height="6" viewBox="0 0 9 6"><path d="M0 6h9L4.5 0z" fill="#8b9cc4"/></svg>
<svg style="left:1395px;top:659px;" width="9" height="6" viewBox="0 0 9 6"><path d="M0 0h9L4.5 6z" fill="#8b9cc4"/></svg>
<div style="left:1399px;top:441px;width:2px;height:17px;background:#8b9cc4;"></div>
<div style="left:920px;top:449px;width:468px;height:222px;overflow:hidden">
<span style="left:6.5px;top:4.75px;font-size:12.5px;line-height:12.5px;color:#1a1a1a;letter-spacing:-0.286px;">$00</span>
<span style="left:70.5px;top:4.75px;font-size:12.5px;line-height:12.5px;color:#1a1a1a;letter-spacing:-0.953px;">1</span>
<span style="left:135.0px;top:4.75px;font-size:12.5px;line-height:12.5px;color:#1a1a1a;letter-spacing:0.486px;">&lt;control&gt;</span>
<span style="left:197.8px;top:4.75px;font-size:12.5px;line-height:12.5px;color:#1a1a1a;letter-spacing:-0.151px;">[NULL]</span>
<span style="left:6.5px;top:25.75px;font-size:12.5px;line-height:12.5px;color:#1a1a1a;letter-spacing:-0.286px;">$01</span>
<span style="left:135.0px;top:25.75px;font-size:12.5px;line-height:12.5px;color:#1a1a1a;letter-spacing:0.486px;">&lt;control&gt;</span>
<span style="left:197.8px;top:25.75px;font-size:12.5px;line-height:12.5px;color:#1a1a1a;letter-spacing:-0.211px;">[START OF HEADING]</span>
<span style="left:6.5px;top:46.75px;font-size:12.5px;line-height:12.5px;color:#1a1a1a;letter-spacing:-0.286px;">$02</span>
<span style="left:135.0px;top:46.75px;font-size:12.5px;line-height:12.5px;color:#1a1a1a;letter-spacing:0.486px;">&lt;control&gt;</span>
<span style="left:197.8px;top:46.75px;font-size:12.5px;line-height:12.5px;color:#1a1a1a;letter-spacing:-0.372px;">[START OF TEXT]</span>
<span style="left:6.5px;top:67.75px;font-size:12.5px;line-height:12.5px;color:#1a1a1a;letter-spacing:-0.286px;">$03</span>
<span style="left:135.0px;top:67.75px;font-size:12.5px;line-height:12.5px;color:#1a1a1a;letter-spacing:0.486px;">&lt;control&gt;</span>
<span style="left:197.8px;top:67.75px;font-size:12.5px;line-height:12.5px;color:#1a1a1a;letter-spacing:-0.260px;">[END OF TEXT]</span>
<span style="left:6.5px;top:88.75px;font-size:12.5px;line-height:12.5px;color:#1a1a1a;letter-spacing:-0.286px;">$04</span>
<span style="left:135.0px;top:88.75px;font-size:12.5px;line-height:12.5px;color:#1a1a1a;letter-spacing:0.486px;">&lt;control&gt;</span>
<span style="left:197.8px;top:88.75px;font-size:12.5px;line-height:12.5px;color:#1a1a1a;letter-spacing:-0.075px;">[END OF TRANSMISSION]</span>
<span style="left:6.5px;top:109.75px;font-size:12.5px;line-height:12.5px;color:#1a1a1a;letter-spacing:-0.286px;">$05</span>
<span style="left:135.0px;top:109.75px;font-size:12.5px;line-height:12.5px;color:#1a1a1a;letter-spacing:0.486px;">&lt;control&gt;</span>
<span style="left:197.8px;top:109.75px;font-size:12.5px;line-height:12.5px;color:#1a1a1a;letter-spacing:-0.186px;">[ENQUIRY]</span>
<span style="left:6.5px;top:130.75px;font-size:12.5px;line-height:12.5px;color:#1a1a1a;letter-spacing:-0.286px;">$06</span>
<span style="left:135.0px;top:130.75px;font-size:12.5px;line-height:12.5px;color:#1a1a1a;letter-spacing:0.486px;">&lt;control&gt;</span>
<span style="left:197.8px;top:130.75px;font-size:12.5px;line-height:12.5px;color:#1a1a1a;letter-spacing:-0.352px;">[ACKNOWLEDGE]</span>
<span style="left:6.5px;top:151.75px;font-size:12.5px;line-height:12.5px;color:#1a1a1a;letter-spacing:-0.286px;">$07</span>
<span style="left:135.0px;top:151.75px;font-size:12.5px;line-height:12.5px;color:#1a1a1a;letter-spacing:0.486px;">&lt;control&gt;</span>
<span style="left:197.8px;top:151.75px;font-size:12.5px;line-height:12.5px;color:#1a1a1a;letter-spacing:-0.589px;">[BELL]</span>
<span style="left:6.5px;top:172.75px;font-size:12.5px;line-height:12.5px;color:#1a1a1a;letter-spacing:-0.286px;">$08</span>
<span style="left:70.5px;top:172.75px;font-size:12.5px;line-height:12.5px;color:#1a1a1a;letter-spacing:-0.953px;">1</span>
<span style="left:135.0px;top:172.75px;font-size:12.5px;line-height:12.5px;color:#1a1a1a;letter-spacing:0.486px;">&lt;control&gt;</span>
<span style="left:197.8px;top:172.75px;font-size:12.5px;line-height:12.5px;color:#1a1a1a;letter-spacing:-0.585px;">[BACKSPACE]</span>
<span style="left:6.5px;top:193.75px;font-size:12.5px;line-height:12.5px;color:#1a1a1a;letter-spacing:-0.286px;">$09</span>
<span style="left:70.5px;top:193.75px;font-size:12.5px;line-height:12.5px;color:#1a1a1a;letter-spacing:-0.953px;">2</span>
<span style="left:135.0px;top:193.75px;font-size:12.5px;line-height:12.5px;color:#1a1a1a;letter-spacing:0.486px;">&lt;control&gt;</span>
<span style="left:197.8px;top:193.75px;font-size:12.5px;line-height:12.5px;color:#1a1a1a;letter-spacing:-0.255px;">[CHARACTER TABULATION]</span>
<span style="left:6.5px;top:214.75px;font-size:12.5px;line-height:12.5px;color:#1a1a1a;letter-spacing:-0.750px;">$0A</span>
<span style="left:135.0px;top:214.75px;font-size:12.5px;line-height:12.5px;color:#1a1a1a;letter-spacing:0.486px;">&lt;control&gt;</span>
<span style="left:197.8px;top:214.75px;font-size:12.5px;line-height:12.5px;color:#1a1a1a;letter-spacing:-0.434px;">[LINE FEED (LF)]</span>
</div>
<div style="left:1155px;top:684px;width:80px;height:24px;background:#5072ec;border-radius:4px;"></div>
<span style="left:1186.5px;top:690.25px;font-size:12.5px;line-height:12.5px;color:#fff;letter-spacing:-0.531px;">OK</span>
<div style="left:1243px;top:684px;width:80px;height:24px;background:#c9d2e8;border-radius:4px;"></div>
<span style="left:1264.0px;top:690.25px;font-size:12.5px;line-height:12.5px;color:#1a1a1a;letter-spacing:-0.154px;">Cancel</span>
<div style="left:1331px;top:684px;width:80px;height:24px;background:#c9d2e8;border-radius:4px;"></div>
<span style="left:1357.5px;top:690.25px;font-size:12.5px;line-height:12.5px;color:#1a1a1a;letter-spacing:0.320px;">Help</span>
<div style="left:1357.5px;top:702.5px;width:9px;height:1px;background:#1a1a1a;"></div>
</body></html>
